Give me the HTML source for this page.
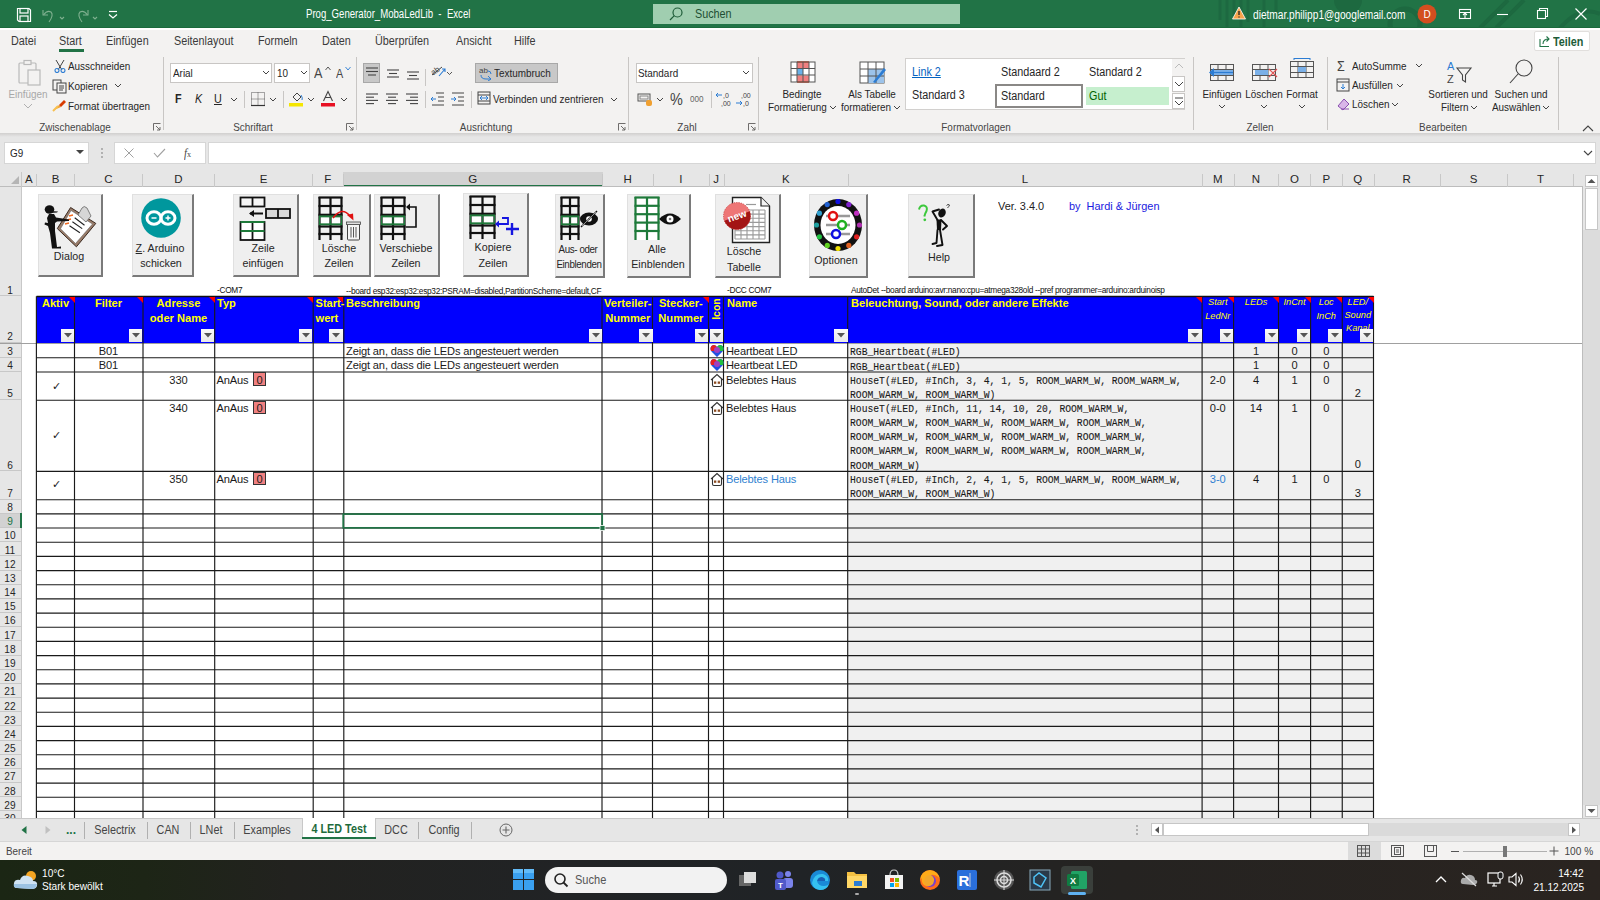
<!DOCTYPE html><html><head><meta charset="utf-8"><style>html,body{margin:0;padding:0;}body{width:1600px;height:900px;overflow:hidden;position:relative;background:#fff;font-family:"Liberation Sans", sans-serif;}</style></head><body>
<div style="position:absolute;left:0px;top:0px;width:1600px;height:28px;background:#217346;"></div>
<svg style="position:absolute;left:1180px;top:0px;" width="420" height="28" viewBox="0 0 420 28"><g fill="none" stroke="#1d6840" opacity="0.9"><path d="M40 0 V20 M47 0 V28 M54 0 V16 M61 0 V28 M68 0 V22 M84 0 V28 M96 0 V12" stroke-width="3"/><circle cx="168" cy="0" r="14" fill="#1d6840" stroke="none"/><circle cx="225" cy="24" r="15" stroke-width="5"/><path d="M300 28 L328 0 M316 28 L344 0 M380 28 Q400 5 420 14" stroke-width="4"/></g></svg>
<svg style="position:absolute;left:16px;top:7px;" width="16" height="16" viewBox="0 0 16 16"><g fill="none" stroke="#fff" stroke-width="1.2"><path d="M1.5 1.5 H13 L14.5 3 V14.5 H3 L1.5 13 Z"/><rect x="4" y="1.5" width="8" height="4.5"/><rect x="4" y="9" width="8" height="5.5"/></g></svg>
<svg style="position:absolute;left:41px;top:7px;" width="24" height="16" viewBox="0 0 24 16"><g fill="none" stroke="#7fb08f" stroke-width="1.1"><path d="M2 3 V8 H7"/><path d="M2.5 8 Q6 3 10 5 Q13 8 8 15"/><path d="M19 10 L21 12 L23 10"/></g></svg>
<svg style="position:absolute;left:74px;top:7px;" width="24" height="16" viewBox="0 0 24 16"><g fill="none" stroke="#7fb08f" stroke-width="1.1"><path d="M14 3 V8 H9"/><path d="M13.5 8 Q10 3 6 5 Q3 8 8 15"/><path d="M19 10 L21 12 L23 10"/></g></svg>
<svg style="position:absolute;left:106px;top:8px;" width="14" height="14" viewBox="0 0 14 14"><g fill="none" stroke="#fff" stroke-width="1.2"><path d="M3 3.5 H11"/><path d="M3 6.5 L7 10 L11 6.5"/></g></svg>
<div style="position:absolute;left:306.00px;transform-origin:0 50%;top:4.50px;height:18px;line-height:18px;font-size:12px;color:#fff;white-space:nowrap;transform:scaleX(0.8);">Prog_Generator_MobaLedLib&nbsp; - &nbsp;Excel</div>
<div style="position:absolute;left:653px;top:4px;width:307px;height:20px;background:#a0ceb0;"></div>
<svg style="position:absolute;left:668px;top:6px;" width="16" height="16" viewBox="0 0 16 16"><g fill="none" stroke="#1e5c38" stroke-width="1.2"><circle cx="9.5" cy="6.5" r="4.5"/><path d="M6.3 9.7 L2 14"/></g></svg>
<div style="position:absolute;left:695.00px;transform-origin:0 50%;top:5.00px;height:18px;line-height:18px;font-size:12px;color:#1e4f33;white-space:nowrap;transform:scaleX(0.9);">Suchen</div>
<svg style="position:absolute;left:1232px;top:6px;" width="14" height="14" viewBox="0 0 14 14"><path d="M7 1 L13.5 13 H0.5 Z" fill="#f7a34b" stroke="#fff" stroke-width="0.8"/><path d="M7 5 V9 M7 10.5 V11.5" stroke="#222" stroke-width="1.3"/></svg>
<div style="position:absolute;left:1253.00px;transform-origin:0 50%;top:5.50px;height:18px;line-height:18px;font-size:12px;color:#fff;white-space:nowrap;transform:scaleX(0.845);">dietmar.philipp1@googlemail.com</div>
<svg style="position:absolute;left:1417px;top:4px;" width="20" height="20" viewBox="0 0 20 20"><circle cx="10" cy="10" r="9.5" fill="#d34e1f"/><text x="10" y="14" text-anchor="middle" font-size="10" fill="#fff" font-family="Liberation Sans">D</text></svg>
<svg style="position:absolute;left:1458px;top:7px;" width="14" height="14" viewBox="0 0 14 14"><g fill="none" stroke="#fff" stroke-width="1.1"><rect x="1.5" y="2.5" width="11" height="9"/><path d="M1.5 5.5 H12.5 M7 5.5 V11.5 M5 8 L7 6 L9 8"/></g></svg>
<svg style="position:absolute;left:1496px;top:7px;" width="14" height="14" viewBox="0 0 14 14"><path d="M1 7.5 H12" stroke="#fff" stroke-width="1.1"/></svg>
<svg style="position:absolute;left:1536px;top:7px;" width="14" height="14" viewBox="0 0 14 14"><g fill="none" stroke="#fff" stroke-width="1.1"><rect x="1.5" y="3.5" width="8" height="8"/><path d="M3.5 3.5 V1.5 H11.5 V9.5 H9.5"/></g></svg>
<svg style="position:absolute;left:1574px;top:7px;" width="14" height="14" viewBox="0 0 14 14"><path d="M1.5 1.5 L12.5 12.5 M12.5 1.5 L1.5 12.5" stroke="#fff" stroke-width="1.2"/></svg>
<div style="position:absolute;left:0px;top:28px;width:1600px;height:105px;background:#f3f2f1;"></div>
<div style="position:absolute;left:0px;top:27px;width:1600px;height:1px;background:#1b6a3c;"></div>
<div style="position:absolute;left:0px;top:28px;width:1600px;height:1.5px;background:#ffffff;"></div>
<div style="position:absolute;left:11.00px;transform-origin:0 50%;top:32.00px;height:18px;line-height:18px;font-size:12px;color:#3a3a3a;white-space:nowrap;transform:scaleX(0.9);">Datei</div>
<div style="position:absolute;left:59.00px;transform-origin:0 50%;top:32.00px;height:18px;line-height:18px;font-size:12px;color:#3a3a3a;white-space:nowrap;transform:scaleX(0.9);">Start</div>
<div style="position:absolute;left:106.00px;transform-origin:0 50%;top:32.00px;height:18px;line-height:18px;font-size:12px;color:#3a3a3a;white-space:nowrap;transform:scaleX(0.9);">Einfügen</div>
<div style="position:absolute;left:174.00px;transform-origin:0 50%;top:32.00px;height:18px;line-height:18px;font-size:12px;color:#3a3a3a;white-space:nowrap;transform:scaleX(0.9);">Seitenlayout</div>
<div style="position:absolute;left:258.00px;transform-origin:0 50%;top:32.00px;height:18px;line-height:18px;font-size:12px;color:#3a3a3a;white-space:nowrap;transform:scaleX(0.9);">Formeln</div>
<div style="position:absolute;left:322.00px;transform-origin:0 50%;top:32.00px;height:18px;line-height:18px;font-size:12px;color:#3a3a3a;white-space:nowrap;transform:scaleX(0.9);">Daten</div>
<div style="position:absolute;left:375.00px;transform-origin:0 50%;top:32.00px;height:18px;line-height:18px;font-size:12px;color:#3a3a3a;white-space:nowrap;transform:scaleX(0.9);">Überprüfen</div>
<div style="position:absolute;left:456.00px;transform-origin:0 50%;top:32.00px;height:18px;line-height:18px;font-size:12px;color:#3a3a3a;white-space:nowrap;transform:scaleX(0.9);">Ansicht</div>
<div style="position:absolute;left:514.00px;transform-origin:0 50%;top:32.00px;height:18px;line-height:18px;font-size:12px;color:#3a3a3a;white-space:nowrap;transform:scaleX(0.9);">Hilfe</div>
<div style="position:absolute;left:59px;top:49px;width:25px;height:2.5px;background:#217346;"></div>
<div style="position:absolute;left:1534px;top:31px;width:56px;height:20px;background:#fff;border:1px solid #e1dfdd;border-radius:2px;box-sizing:border-box;"></div>
<svg style="position:absolute;left:1538px;top:34px;" width="14" height="14" viewBox="0 0 14 14"><g fill="none" stroke="#217346" stroke-width="1.1"><path d="M2 5 V12.5 H11"/><path d="M5 10 Q5 5 11 5 M8.5 2.5 L11 5 L8.5 7.5"/></g></svg>
<div style="position:absolute;left:1553.00px;transform-origin:0 50%;top:32.50px;height:18px;line-height:18px;font-size:12px;color:#1e5c38;white-space:nowrap;transform:scaleX(0.9);font-weight:bold;">Teilen</div>
<div style="position:absolute;left:163px;top:57px;width:1px;height:73px;background:#c8c6c4;"></div>
<div style="position:absolute;left:356px;top:57px;width:1px;height:73px;background:#c8c6c4;"></div>
<div style="position:absolute;left:628px;top:57px;width:1px;height:73px;background:#c8c6c4;"></div>
<div style="position:absolute;left:758px;top:57px;width:1px;height:73px;background:#c8c6c4;"></div>
<div style="position:absolute;left:1193px;top:57px;width:1px;height:73px;background:#c8c6c4;"></div>
<div style="position:absolute;left:1327px;top:57px;width:1px;height:73px;background:#c8c6c4;"></div>
<div style="position:absolute;left:1558px;top:57px;width:1px;height:73px;background:#c8c6c4;"></div>
<div style="position:absolute;left:-225.00px;width:600px;text-align:center;transform-origin:50% 50%;top:118.50px;height:17px;line-height:17px;font-size:11px;color:#454545;white-space:nowrap;transform:scaleX(0.9);">Zwischenablage</div>
<div style="position:absolute;left:-47.00px;width:600px;text-align:center;transform-origin:50% 50%;top:118.50px;height:17px;line-height:17px;font-size:11px;color:#454545;white-space:nowrap;transform:scaleX(0.9);">Schriftart</div>
<div style="position:absolute;left:186.00px;width:600px;text-align:center;transform-origin:50% 50%;top:118.50px;height:17px;line-height:17px;font-size:11px;color:#454545;white-space:nowrap;transform:scaleX(0.9);">Ausrichtung</div>
<div style="position:absolute;left:387.00px;width:600px;text-align:center;transform-origin:50% 50%;top:118.50px;height:17px;line-height:17px;font-size:11px;color:#454545;white-space:nowrap;transform:scaleX(0.9);">Zahl</div>
<div style="position:absolute;left:676.00px;width:600px;text-align:center;transform-origin:50% 50%;top:118.50px;height:17px;line-height:17px;font-size:11px;color:#454545;white-space:nowrap;transform:scaleX(0.9);">Formatvorlagen</div>
<div style="position:absolute;left:960.00px;width:600px;text-align:center;transform-origin:50% 50%;top:118.50px;height:17px;line-height:17px;font-size:11px;color:#454545;white-space:nowrap;transform:scaleX(0.9);">Zellen</div>
<div style="position:absolute;left:1143.00px;width:600px;text-align:center;transform-origin:50% 50%;top:118.50px;height:17px;line-height:17px;font-size:11px;color:#454545;white-space:nowrap;transform:scaleX(0.9);">Bearbeiten</div>
<svg style="position:absolute;left:153px;top:123px;" width="8" height="8" viewBox="0 0 8 8"><g fill="none" stroke="#605e5c" stroke-width="0.9"><path d="M0.5 7.5 V0.5 H7.5"/><path d="M3 3 L7 7 M7 4 V7 H4"/></g></svg>
<svg style="position:absolute;left:346px;top:123px;" width="8" height="8" viewBox="0 0 8 8"><g fill="none" stroke="#605e5c" stroke-width="0.9"><path d="M0.5 7.5 V0.5 H7.5"/><path d="M3 3 L7 7 M7 4 V7 H4"/></g></svg>
<svg style="position:absolute;left:618px;top:123px;" width="8" height="8" viewBox="0 0 8 8"><g fill="none" stroke="#605e5c" stroke-width="0.9"><path d="M0.5 7.5 V0.5 H7.5"/><path d="M3 3 L7 7 M7 4 V7 H4"/></g></svg>
<svg style="position:absolute;left:748px;top:123px;" width="8" height="8" viewBox="0 0 8 8"><g fill="none" stroke="#605e5c" stroke-width="0.9"><path d="M0.5 7.5 V0.5 H7.5"/><path d="M3 3 L7 7 M7 4 V7 H4"/></g></svg>
<svg style="position:absolute;left:1582px;top:124px;" width="12" height="8" viewBox="0 0 12 8"><path d="M1 7 L6 2 L11 7" fill="none" stroke="#444" stroke-width="1.1"/></svg>
<svg style="position:absolute;left:17px;top:59px;" width="28" height="28" viewBox="0 0 28 28"><g fill="none" stroke="#b9b9b9" stroke-width="1.2"><rect x="2" y="4" width="17" height="20" rx="1"/><rect x="7" y="1.5" width="7" height="4" fill="#f3f2f1"/><rect x="11" y="11" width="12" height="15" fill="#f3f2f1"/></g></svg>
<div style="position:absolute;left:-272.00px;width:600px;text-align:center;transform-origin:50% 50%;top:85.50px;height:17px;line-height:17px;font-size:11px;color:#a8a8a8;white-space:nowrap;transform:scaleX(0.9);">Einfügen</div>
<svg style="position:absolute;left:23px;top:103px;" width="10" height="6" viewBox="0 0 10 6"><path d="M1 1 L5 5 L9 1" fill="none" stroke="#b0b0b0" stroke-width="1"/></svg>
<svg style="position:absolute;left:53px;top:59px;" width="14" height="14" viewBox="0 0 14 14"><g fill="none" stroke="#444" stroke-width="1"><path d="M3 1 L9 11 M11 1 L5 11"/></g><g fill="none" stroke="#2b7cd3" stroke-width="1.1"><circle cx="4" cy="11.5" r="2"/><circle cx="10" cy="11.5" r="2"/></g></svg>
<div style="position:absolute;left:68.00px;transform-origin:0 50%;top:57.50px;height:17px;line-height:17px;font-size:11px;color:#262626;white-space:nowrap;transform:scaleX(0.9);">Ausschneiden</div>
<svg style="position:absolute;left:52px;top:79px;" width="15" height="15" viewBox="0 0 15 15"><g fill="none" stroke="#444" stroke-width="1"><rect x="1" y="1" width="8" height="10"/><rect x="5" y="4" width="9" height="10" fill="#f3f2f1"/><path d="M7 7 H12 M7 9 H12 M7 11 H11"/></g></svg>
<div style="position:absolute;left:68.00px;transform-origin:0 50%;top:77.50px;height:17px;line-height:17px;font-size:11px;color:#262626;white-space:nowrap;transform:scaleX(0.9);">Kopieren</div>
<svg style="position:absolute;left:114px;top:83px;" width="8" height="6" viewBox="0 0 8 6"><path d="M1 1 L4 4 L7 1" fill="none" stroke="#444" stroke-width="1"/></svg>
<svg style="position:absolute;left:52px;top:98px;" width="15" height="14" viewBox="0 0 15 14"><path d="M2 12 L7 7 L9 9 Z" fill="#f0a030"/><path d="M7 7 L12 2 L14 4 L9 9 Z" fill="#d83b01"/><path d="M1 13 L6 8" stroke="#f7c050" stroke-width="2"/></svg>
<div style="position:absolute;left:68.00px;transform-origin:0 50%;top:97.50px;height:17px;line-height:17px;font-size:11px;color:#262626;white-space:nowrap;transform:scaleX(0.9);">Format übertragen</div>
<div style="position:absolute;left:170px;top:63px;width:102px;height:20px;background:#fff;border:1px solid #c8c6c4;box-sizing:border-box;"></div>
<div style="position:absolute;left:173.00px;transform-origin:0 50%;top:64.50px;height:17px;line-height:17px;font-size:11px;color:#262626;white-space:nowrap;transform:scaleX(0.9);">Arial</div>
<svg style="position:absolute;left:262px;top:70px;" width="8" height="6" viewBox="0 0 8 6"><path d="M1 1 L4 4 L7 1" fill="none" stroke="#444" stroke-width="1"/></svg>
<div style="position:absolute;left:274px;top:63px;width:36px;height:20px;background:#fff;border:1px solid #c8c6c4;box-sizing:border-box;"></div>
<div style="position:absolute;left:277.00px;transform-origin:0 50%;top:64.50px;height:17px;line-height:17px;font-size:11px;color:#262626;white-space:nowrap;transform:scaleX(0.9);">10</div>
<svg style="position:absolute;left:300px;top:70px;" width="8" height="6" viewBox="0 0 8 6"><path d="M1 1 L4 4 L7 1" fill="none" stroke="#444" stroke-width="1"/></svg>
<div style="position:absolute;left:314.00px;transform-origin:0 50%;top:63.00px;height:20px;line-height:20px;font-size:14px;color:#444;white-space:nowrap;transform:scaleX(0.9);">A</div>
<svg style="position:absolute;left:325px;top:66px;" width="6" height="5" viewBox="0 0 6 5"><path d="M0.5 4 L3 1 L5.5 4" fill="none" stroke="#444" stroke-width="0.9"/></svg>
<div style="position:absolute;left:336.00px;transform-origin:0 50%;top:65.00px;height:18px;line-height:18px;font-size:12px;color:#444;white-space:nowrap;transform:scaleX(0.9);">A</div>
<svg style="position:absolute;left:345px;top:66px;" width="6" height="5" viewBox="0 0 6 5"><path d="M0.5 1 L3 4 L5.5 1" fill="none" stroke="#2b7cd3" stroke-width="0.9"/></svg>
<div style="position:absolute;left:175.00px;transform-origin:0 50%;top:90.00px;height:18px;line-height:18px;font-size:12px;color:#262626;white-space:nowrap;transform:scaleX(0.9);font-weight:bold;">F</div>
<div style="position:absolute;left:195.00px;transform-origin:0 50%;top:90.00px;height:18px;line-height:18px;font-size:12px;color:#262626;white-space:nowrap;transform:scaleX(0.9);font-style:italic;">K</div>
<div style="position:absolute;left:214.00px;transform-origin:0 50%;top:90.00px;height:18px;line-height:18px;font-size:12px;color:#262626;white-space:nowrap;transform:scaleX(0.9);text-decoration:underline;">U</div>
<svg style="position:absolute;left:230px;top:97px;" width="8" height="6" viewBox="0 0 8 6"><path d="M1 1 L4 4 L7 1" fill="none" stroke="#444" stroke-width="1"/></svg>
<div style="position:absolute;left:244px;top:91px;width:1px;height:17px;background:#c8c6c4;"></div>
<svg style="position:absolute;left:250px;top:91px;" width="16" height="16" viewBox="0 0 16 16"><g fill="none" stroke="#555" stroke-width="1" stroke-dasharray="1 1"><rect x="1.5" y="1.5" width="13" height="13"/><path d="M8 1.5 V14.5 M1.5 8 H14.5"/></g><path d="M1 14.5 H15" stroke="#333" stroke-width="1.2"/></svg>
<svg style="position:absolute;left:269px;top:97px;" width="8" height="6" viewBox="0 0 8 6"><path d="M1 1 L4 4 L7 1" fill="none" stroke="#444" stroke-width="1"/></svg>
<div style="position:absolute;left:283px;top:91px;width:1px;height:17px;background:#c8c6c4;"></div>
<svg style="position:absolute;left:289px;top:90px;" width="16" height="18" viewBox="0 0 16 18"><g fill="none" stroke="#444" stroke-width="1"><path d="M4 7 L8 3 L12 7 L8 11 Z"/></g><path d="M12 5 Q14 8 13 10" stroke="#2b7cd3" fill="none"/><rect x="0" y="13" width="14" height="3.5" fill="#f5e600"/></svg>
<svg style="position:absolute;left:307px;top:97px;" width="8" height="6" viewBox="0 0 8 6"><path d="M1 1 L4 4 L7 1" fill="none" stroke="#444" stroke-width="1"/></svg>
<svg style="position:absolute;left:321px;top:90px;" width="15" height="18" viewBox="0 0 15 18"><path d="M2.5 11 L7 1.5 L11.5 11 M4.5 7.5 H9.5" fill="none" stroke="#444" stroke-width="1.1"/><rect x="0" y="13" width="14" height="3.5" fill="#e81123"/></svg>
<svg style="position:absolute;left:340px;top:97px;" width="8" height="6" viewBox="0 0 8 6"><path d="M1 1 L4 4 L7 1" fill="none" stroke="#444" stroke-width="1"/></svg>
<div style="position:absolute;left:363px;top:63px;width:17px;height:20px;background:#c8c8c8;border:1px solid #a8a8a8;box-sizing:border-box;"></div>
<svg style="position:absolute;left:364px;top:67px;" width="16" height="16" viewBox="0 0 16 16"><path d="M2 1.0 H14" stroke="#444" stroke-width="1.1"/><path d="M2 4.5 H14" stroke="#444" stroke-width="1.1"/><path d="M4 8.0 H12" stroke="#444" stroke-width="1.1"/></svg>
<svg style="position:absolute;left:385px;top:69px;" width="16" height="16" viewBox="0 0 16 16"><path d="M2 1.0 H14" stroke="#444" stroke-width="1.1"/><path d="M4 4.5 H12" stroke="#444" stroke-width="1.1"/><path d="M2 8.0 H14" stroke="#444" stroke-width="1.1"/></svg>
<svg style="position:absolute;left:405px;top:71px;" width="16" height="16" viewBox="0 0 16 16"><path d="M2 1.0 H14" stroke="#444" stroke-width="1.1"/><path d="M4 4.5 H12" stroke="#444" stroke-width="1.1"/><path d="M2 8.0 H14" stroke="#444" stroke-width="1.1"/></svg>
<svg style="position:absolute;left:430px;top:63px;" width="22" height="18" viewBox="0 0 22 18"><path d="M2 12 L12 4" stroke="#444" stroke-width="1"/><text x="1" y="10" font-size="8" fill="#444" font-family="Liberation Sans" transform="rotate(-35 6 8)">ab</text><path d="M9 13 L15 6 M12 6 H15 V9" stroke="#2b7cd3" fill="none" stroke-width="1.1"/><path d="M17 9 L19.5 11.5 L22 9" stroke="#444" fill="none" stroke-width="0.9"/></svg>
<div style="position:absolute;left:425px;top:69px;width:1px;height:17px;background:#c8c6c4;"></div>
<div style="position:absolute;left:475px;top:63px;width:83px;height:20px;background:#c8c8c8;border:1px solid #a8a8a8;box-sizing:border-box;"></div>
<svg style="position:absolute;left:478px;top:65px;" width="16" height="16" viewBox="0 0 16 16"><text x="1" y="8" font-size="8" fill="#444" font-family="Liberation Sans">ab</text><path d="M3 10 Q3 14 8 14 H13 M10 11 L13 14 L10 16 M13 9 Q13 6 10 6" stroke="#2b7cd3" fill="none" stroke-width="1"/></svg>
<div style="position:absolute;left:494.00px;transform-origin:0 50%;top:64.50px;height:17px;line-height:17px;font-size:11px;color:#262626;white-space:nowrap;transform:scaleX(0.9);">Textumbruch</div>
<svg style="position:absolute;left:364px;top:93px;" width="16" height="16" viewBox="0 0 16 16"><path d="M2 1.0 H14" stroke="#444" stroke-width="1.1"/><path d="M2 4.2 H10" stroke="#444" stroke-width="1.1"/><path d="M2 7.4 H14" stroke="#444" stroke-width="1.1"/><path d="M2 10.600000000000001 H10" stroke="#444" stroke-width="1.1"/></svg>
<svg style="position:absolute;left:384px;top:93px;" width="16" height="16" viewBox="0 0 16 16"><path d="M2 1.0 H14" stroke="#444" stroke-width="1.1"/><path d="M4 4.2 H12" stroke="#444" stroke-width="1.1"/><path d="M2 7.4 H14" stroke="#444" stroke-width="1.1"/><path d="M4 10.600000000000001 H12" stroke="#444" stroke-width="1.1"/></svg>
<svg style="position:absolute;left:404px;top:93px;" width="16" height="16" viewBox="0 0 16 16"><path d="M2 1.0 H14" stroke="#444" stroke-width="1.1"/><path d="M6 4.2 H14" stroke="#444" stroke-width="1.1"/><path d="M2 7.4 H14" stroke="#444" stroke-width="1.1"/><path d="M6 10.600000000000001 H14" stroke="#444" stroke-width="1.1"/></svg>
<div style="position:absolute;left:425px;top:91px;width:1px;height:17px;background:#c8c6c4;"></div>
<svg style="position:absolute;left:430px;top:92px;" width="16" height="14" viewBox="0 0 16 14"><path d="M6 1 H14 M8 5 H14 M8 9 H14 M2 13 H14" stroke="#444" stroke-width="1"/><path d="M1 7 H6 M3 5 L1 7 L3 9" stroke="#2b7cd3" fill="none" stroke-width="1"/></svg>
<svg style="position:absolute;left:450px;top:92px;" width="16" height="14" viewBox="0 0 16 14"><path d="M2 1 H14 M8 5 H14 M8 9 H14 M2 13 H14" stroke="#444" stroke-width="1"/><path d="M1 7 H6 M4 5 L6 7 L4 9" stroke="#2b7cd3" fill="none" stroke-width="1"/></svg>
<div style="position:absolute;left:471px;top:91px;width:1px;height:17px;background:#c8c6c4;"></div>
<svg style="position:absolute;left:477px;top:91px;" width="14" height="14" viewBox="0 0 14 14"><rect x="1" y="1" width="12" height="12" fill="none" stroke="#444"/><path d="M1 4 H13 M1 10 H13" stroke="#444"/><path d="M3 7 H11 M5 5 L3 7 L5 9 M9 5 L11 7 L9 9" stroke="#2b7cd3" fill="none"/></svg>
<div style="position:absolute;left:493.00px;transform-origin:0 50%;top:90.50px;height:17px;line-height:17px;font-size:11px;color:#262626;white-space:nowrap;transform:scaleX(0.9);">Verbinden und zentrieren</div>
<svg style="position:absolute;left:610px;top:97px;" width="8" height="6" viewBox="0 0 8 6"><path d="M1 1 L4 4 L7 1" fill="none" stroke="#444" stroke-width="1"/></svg>
<div style="position:absolute;left:636px;top:63px;width:117px;height:20px;background:#fff;border:1px solid #c8c6c4;box-sizing:border-box;"></div>
<div style="position:absolute;left:638.00px;transform-origin:0 50%;top:64.50px;height:17px;line-height:17px;font-size:11px;color:#262626;white-space:nowrap;transform:scaleX(0.9);">Standard</div>
<svg style="position:absolute;left:742px;top:70px;" width="8" height="6" viewBox="0 0 8 6"><path d="M1 1 L4 4 L7 1" fill="none" stroke="#444" stroke-width="1"/></svg>
<svg style="position:absolute;left:637px;top:92px;" width="16" height="14" viewBox="0 0 16 14"><rect x="1" y="2" width="12" height="7" fill="none" stroke="#555"/><rect x="3" y="4" width="8" height="3" fill="none" stroke="#888"/><rect x="9" y="8" width="6" height="6" rx="2" fill="#f0a030"/></svg>
<svg style="position:absolute;left:656px;top:97px;" width="8" height="6" viewBox="0 0 8 6"><path d="M1 1 L4 4 L7 1" fill="none" stroke="#444" stroke-width="1"/></svg>
<div style="position:absolute;left:670.00px;transform-origin:0 50%;top:88.50px;height:22px;line-height:22px;font-size:16px;color:#444;white-space:nowrap;transform:scaleX(0.9);">%</div>
<div style="position:absolute;left:690.00px;transform-origin:0 50%;top:91.50px;height:15px;line-height:15px;font-size:9px;color:#666;white-space:nowrap;transform:scaleX(0.9);">000</div>
<div style="position:absolute;left:711px;top:91px;width:1px;height:17px;background:#c8c6c4;"></div>
<svg style="position:absolute;left:715px;top:91px;" width="16" height="16" viewBox="0 0 16 16"><text x="8" y="7" font-size="7" fill="#444" font-family="Liberation Sans">,0</text><text x="6" y="15" font-size="7" fill="#444" font-family="Liberation Sans">,00</text><path d="M1 4 H7 M3 2 L1 4 L3 6" stroke="#2b7cd3" fill="none" stroke-width="1"/></svg>
<svg style="position:absolute;left:735px;top:91px;" width="16" height="16" viewBox="0 0 16 16"><text x="6" y="7" font-size="7" fill="#444" font-family="Liberation Sans">,00</text><text x="8" y="15" font-size="7" fill="#444" font-family="Liberation Sans">,0</text><path d="M1 12 H7 M5 10 L7 12 L5 14" stroke="#2b7cd3" fill="none" stroke-width="1"/></svg>
<svg style="position:absolute;left:790px;top:61px;" width="26" height="22" viewBox="0 0 26 22"><rect x="1" y="1" width="24" height="20" fill="#fff"/><rect x="7" y="1.5" width="12" height="6" fill="#f08080"/><rect x="7" y="14.5" width="12" height="6" fill="#f08080"/><rect x="7" y="7.5" width="6" height="6.5" fill="#6ab0e8"/><path d="M7 1 H19 M7 21 H19" stroke="#d04020" stroke-width="1.4"/><g fill="none" stroke="#555" stroke-width="1"><rect x="1" y="1" width="24" height="20"/><path d="M7 1 V21 M13 1 V21 M19 1 V21 M1 7.5 H25 M1 14 H25"/></g></svg>
<div style="position:absolute;left:502.00px;width:600px;text-align:center;transform-origin:50% 50%;top:85.50px;height:17px;line-height:17px;font-size:11px;color:#262626;white-space:nowrap;transform:scaleX(0.9);">Bedingte</div>
<div style="position:absolute;left:767.50px;transform-origin:0 50%;top:98.50px;height:17px;line-height:17px;font-size:11px;color:#262626;white-space:nowrap;transform:scaleX(0.9);">Formatierung</div>
<svg style="position:absolute;left:828.5px;top:105px;" width="8" height="5" viewBox="0 0 8 5"><path d="M1 1 L4 4 L7 1" fill="none" stroke="#444" stroke-width="1"/></svg>
<svg style="position:absolute;left:859px;top:60px;" width="28" height="25" viewBox="0 0 28 25"><g stroke="#555" stroke-width="1" fill="#fff"><rect x="1" y="2" width="24" height="21"/></g><rect x="9" y="9" width="16" height="14" fill="#9cc3ea"/><path d="M9 2 V23 M17 2 V23 M1 9 H25 M1 16 H25" stroke="#555"/><path d="M14 22 L25 8 L27 10 L16 23 Z" fill="#2b7cd3"/></svg>
<div style="position:absolute;left:572.00px;width:600px;text-align:center;transform-origin:50% 50%;top:85.50px;height:17px;line-height:17px;font-size:11px;color:#262626;white-space:nowrap;transform:scaleX(0.9);">Als Tabelle</div>
<div style="position:absolute;left:841.00px;transform-origin:0 50%;top:98.50px;height:17px;line-height:17px;font-size:11px;color:#262626;white-space:nowrap;transform:scaleX(0.9);">formatieren</div>
<svg style="position:absolute;left:893px;top:105px;" width="8" height="5" viewBox="0 0 8 5"><path d="M1 1 L4 4 L7 1" fill="none" stroke="#444" stroke-width="1"/></svg>
<div style="position:absolute;left:905px;top:58px;width:280px;height:52px;background:#fff;border:1px solid #d2d0ce;box-sizing:border-box;"></div>
<div style="position:absolute;left:912.00px;transform-origin:0 50%;top:63.00px;height:18px;line-height:18px;font-size:12px;color:#0563c1;white-space:nowrap;transform:scaleX(0.9);text-decoration:underline;">Link 2</div>
<div style="position:absolute;left:1001.00px;transform-origin:0 50%;top:63.00px;height:18px;line-height:18px;font-size:12px;color:#262626;white-space:nowrap;transform:scaleX(0.9);">Standaard 2</div>
<div style="position:absolute;left:1089.00px;transform-origin:0 50%;top:63.00px;height:18px;line-height:18px;font-size:12px;color:#262626;white-space:nowrap;transform:scaleX(0.9);">Standard 2</div>
<div style="position:absolute;left:912.00px;transform-origin:0 50%;top:86.00px;height:18px;line-height:18px;font-size:12px;color:#262626;white-space:nowrap;transform:scaleX(0.9);">Standard 3</div>
<div style="position:absolute;left:995px;top:84px;width:88px;height:24px;background:#fff;border:2px solid #8a8886;box-sizing:border-box;"></div>
<div style="position:absolute;left:1001.00px;transform-origin:0 50%;top:86.50px;height:18px;line-height:18px;font-size:12px;color:#262626;white-space:nowrap;transform:scaleX(0.9);">Standard</div>
<div style="position:absolute;left:1086px;top:87px;width:83px;height:18px;background:#c6efce;"></div>
<div style="position:absolute;left:1089.00px;transform-origin:0 50%;top:87.00px;height:18px;line-height:18px;font-size:12px;color:#006100;white-space:nowrap;transform:scaleX(0.9);">Gut</div>
<div style="position:absolute;left:1172px;top:59px;width:14px;height:50px;background:#f3f2f1;"></div>
<div style="position:absolute;left:1172px;top:76px;width:13px;height:16px;background:#fff;border:1px solid #c8c6c4;box-sizing:border-box;"></div>
<div style="position:absolute;left:1172px;top:93px;width:13px;height:16px;background:#fff;border:1px solid #c8c6c4;box-sizing:border-box;"></div>
<svg style="position:absolute;left:1174px;top:63px;" width="10" height="6" viewBox="0 0 10 6"><path d="M1 5 L5 1 L9 5" fill="none" stroke="#bbb" stroke-width="1"/></svg>
<svg style="position:absolute;left:1174px;top:81px;" width="10" height="6" viewBox="0 0 10 6"><path d="M1 1 L5 5 L9 1" fill="none" stroke="#444" stroke-width="1"/></svg>
<svg style="position:absolute;left:1174px;top:97px;" width="10" height="9" viewBox="0 0 10 9"><path d="M1 1 H9 M1 4 L5 8 L9 4" fill="none" stroke="#444" stroke-width="1"/></svg>
<svg style="position:absolute;left:1208px;top:61px;" width="28" height="22" viewBox="0 0 28 22"><g stroke="#555" stroke-width="1" fill="none"><rect x="2.5" y="3.5" width="23" height="16"/><path d="M2.5 8.5 H25.5 M2.5 14.5 H25.5 M10 3.5 V19.5 M18 3.5 V19.5"/></g><rect x="6" y="9" width="19" height="5" fill="#7ab0e8"/><path d="M1 11.5 L6 7 V16 Z" fill="#2b7cd3"/><path d="M5 11.5 H25" stroke="#2b7cd3" stroke-width="1.2"/></svg>
<svg style="position:absolute;left:1250px;top:61px;" width="28" height="22" viewBox="0 0 28 22"><g stroke="#555" stroke-width="1" fill="none"><rect x="2.5" y="3.5" width="23" height="16"/><path d="M2.5 8.5 H25.5 M2.5 14.5 H25.5 M10 3.5 V19.5 M18 3.5 V19.5"/></g><rect x="5" y="9" width="13" height="5" fill="#7ab0e8"/><path d="M19 8 L27 16 M27 8 L19 16" stroke="#e05050" stroke-width="1.2"/></svg>
<svg style="position:absolute;left:1288px;top:58px;" width="28" height="22" viewBox="0 0 28 22"><g stroke="#555" stroke-width="1" fill="none"><rect x="2.5" y="3.5" width="23" height="16"/><path d="M2.5 8.5 H25.5 M2.5 14.5 H25.5 M10 3.5 V19.5 M18 3.5 V19.5"/></g><rect x="10" y="9" width="8" height="5" fill="#7ab0e8"/><path d="M6 0.5 H22 M6 0 V2 M22 0 V2" stroke="#2b7cd3"/></svg>
<div style="position:absolute;left:922.00px;width:600px;text-align:center;transform-origin:50% 50%;top:85.50px;height:17px;line-height:17px;font-size:11px;color:#262626;white-space:nowrap;transform:scaleX(0.9);">Einfügen</div>
<div style="position:absolute;left:964.00px;width:600px;text-align:center;transform-origin:50% 50%;top:85.50px;height:17px;line-height:17px;font-size:11px;color:#262626;white-space:nowrap;transform:scaleX(0.9);">Löschen</div>
<div style="position:absolute;left:1002.00px;width:600px;text-align:center;transform-origin:50% 50%;top:85.50px;height:17px;line-height:17px;font-size:11px;color:#262626;white-space:nowrap;transform:scaleX(0.9);">Format</div>
<svg style="position:absolute;left:1218px;top:104px;" width="8" height="6" viewBox="0 0 8 6"><path d="M1 1 L4 4 L7 1" fill="none" stroke="#444" stroke-width="1"/></svg>
<svg style="position:absolute;left:1260px;top:104px;" width="8" height="6" viewBox="0 0 8 6"><path d="M1 1 L4 4 L7 1" fill="none" stroke="#444" stroke-width="1"/></svg>
<svg style="position:absolute;left:1298px;top:104px;" width="8" height="6" viewBox="0 0 8 6"><path d="M1 1 L4 4 L7 1" fill="none" stroke="#444" stroke-width="1"/></svg>
<div style="position:absolute;left:1337.00px;transform-origin:0 50%;top:56.00px;height:20px;line-height:20px;font-size:14px;color:#444;white-space:nowrap;transform:scaleX(0.9);">Σ</div>
<div style="position:absolute;left:1352.00px;transform-origin:0 50%;top:57.50px;height:17px;line-height:17px;font-size:11px;color:#262626;white-space:nowrap;transform:scaleX(0.9);">AutoSumme</div>
<svg style="position:absolute;left:1415px;top:63px;" width="8" height="6" viewBox="0 0 8 6"><path d="M1 1 L4 4 L7 1" fill="none" stroke="#444" stroke-width="1"/></svg>
<svg style="position:absolute;left:1336px;top:78px;" width="14" height="14" viewBox="0 0 14 14"><rect x="1" y="1" width="12" height="12" fill="none" stroke="#444"/><path d="M1 4 H13" stroke="#444"/><path d="M7 6 V11 M5 9 L7 11 L9 9" stroke="#2b7cd3" fill="none"/></svg>
<div style="position:absolute;left:1352.00px;transform-origin:0 50%;top:76.50px;height:17px;line-height:17px;font-size:11px;color:#262626;white-space:nowrap;transform:scaleX(0.9);">Ausfüllen</div>
<svg style="position:absolute;left:1395.5px;top:83px;" width="8" height="5" viewBox="0 0 8 5"><path d="M1 1 L4 4 L7 1" fill="none" stroke="#444" stroke-width="1"/></svg>
<svg style="position:absolute;left:1336px;top:97px;" width="14" height="14" viewBox="0 0 14 14"><path d="M2 9 L8 2 L13 7 L7 13 Z" fill="#d9b6e8" stroke="#8a4fb0"/><path d="M5 12 H13" stroke="#8a4fb0"/></svg>
<div style="position:absolute;left:1352.00px;transform-origin:0 50%;top:95.50px;height:17px;line-height:17px;font-size:11px;color:#262626;white-space:nowrap;transform:scaleX(0.9);">Löschen</div>
<svg style="position:absolute;left:1391px;top:102px;" width="8" height="5" viewBox="0 0 8 5"><path d="M1 1 L4 4 L7 1" fill="none" stroke="#444" stroke-width="1"/></svg>
<svg style="position:absolute;left:1446px;top:59px;" width="28" height="26" viewBox="0 0 28 26"><text x="1" y="11" font-size="11" fill="#2b7cd3" font-family="Liberation Sans">A</text><text x="1" y="24" font-size="11" fill="#444" font-family="Liberation Sans">Z</text><path d="M11 9 H25 L19.5 16 V23 L16.5 21 V16 Z" fill="none" stroke="#444" stroke-width="1.1"/></svg>
<div style="position:absolute;left:1158.00px;width:600px;text-align:center;transform-origin:50% 50%;top:85.50px;height:17px;line-height:17px;font-size:11px;color:#262626;white-space:nowrap;transform:scaleX(0.9);">Sortieren und</div>
<div style="position:absolute;left:1441.00px;transform-origin:0 50%;top:98.50px;height:17px;line-height:17px;font-size:11px;color:#262626;white-space:nowrap;transform:scaleX(0.9);">Filtern</div>
<svg style="position:absolute;left:1470px;top:105px;" width="8" height="5" viewBox="0 0 8 5"><path d="M1 1 L4 4 L7 1" fill="none" stroke="#444" stroke-width="1"/></svg>
<svg style="position:absolute;left:1508px;top:58px;" width="28" height="28" viewBox="0 0 28 28"><circle cx="16" cy="10" r="8" fill="none" stroke="#444" stroke-width="1.1"/><path d="M10 16 L2 25" stroke="#444" stroke-width="1.1"/></svg>
<div style="position:absolute;left:1221.00px;width:600px;text-align:center;transform-origin:50% 50%;top:85.50px;height:17px;line-height:17px;font-size:11px;color:#262626;white-space:nowrap;transform:scaleX(0.9);">Suchen und</div>
<div style="position:absolute;left:1492.00px;transform-origin:0 50%;top:98.50px;height:17px;line-height:17px;font-size:11px;color:#262626;white-space:nowrap;transform:scaleX(0.9);">Auswählen</div>
<svg style="position:absolute;left:1542px;top:105px;" width="8" height="5" viewBox="0 0 8 5"><path d="M1 1 L4 4 L7 1" fill="none" stroke="#444" stroke-width="1"/></svg>
<div style="position:absolute;left:0px;top:133px;width:1600px;height:54px;background:#e6e6e6;"></div>
<div style="position:absolute;left:0px;top:133px;width:1600px;height:4px;background:linear-gradient(#d0cfce,#e6e6e6);"></div>
<div style="position:absolute;left:4px;top:142px;width:85px;height:22px;background:#fff;border:1px solid #d6d6d6;box-sizing:border-box;"></div>
<div style="position:absolute;left:10.00px;transform-origin:0 50%;top:144.50px;height:17px;line-height:17px;font-size:11px;color:#262626;white-space:nowrap;transform:scaleX(0.9);">G9</div>
<svg style="position:absolute;left:75px;top:149px;" width="10" height="6" viewBox="0 0 10 6"><path d="M1 1 H9 L5 5 Z" fill="#444"/></svg>
<svg style="position:absolute;left:99px;top:146px;" width="6" height="14" viewBox="0 0 6 14"><circle cx="3" cy="3" r="0.9" fill="#999"/><circle cx="3" cy="7" r="0.9" fill="#999"/><circle cx="3" cy="11" r="0.9" fill="#999"/></svg>
<div style="position:absolute;left:114px;top:142px;width:92px;height:22px;background:#fff;border:1px solid #d6d6d6;box-sizing:border-box;"></div>
<svg style="position:absolute;left:123px;top:147px;" width="12" height="12" viewBox="0 0 12 12"><path d="M1.5 1.5 L10.5 10.5 M10.5 1.5 L1.5 10.5" stroke="#a0a0a0" stroke-width="1"/></svg>
<svg style="position:absolute;left:153px;top:147px;" width="13" height="12" viewBox="0 0 13 12"><path d="M1 6 L4.5 10 L12 2" fill="none" stroke="#a0a0a0" stroke-width="1.1"/></svg>
<div style="position:absolute;left:184.00px;transform-origin:0 50%;top:144.00px;height:18px;line-height:18px;font-size:12px;color:#444;white-space:nowrap;transform:scaleX(0.9);font-family:'Liberation Serif',serif;"><i>f</i><span style="font-size:9px">x</span></div>
<div style="position:absolute;left:208px;top:142px;width:1388px;height:22px;background:#fff;border:1px solid #d6d6d6;box-sizing:border-box;"></div>
<svg style="position:absolute;left:1583px;top:150px;" width="10" height="7" viewBox="0 0 10 7"><path d="M1 1 L5 5 L9 1" fill="none" stroke="#444" stroke-width="1.1"/></svg>
<div style="position:absolute;left:0px;top:172px;width:1583px;height:15px;background:#e6e6e6;"></div>
<div style="position:absolute;left:343px;top:172px;width:259.5px;height:15px;background:#d2d2d2;"></div>
<div style="position:absolute;left:343px;top:185px;width:259.5px;height:2px;background:#217346;"></div>
<div style="position:absolute;left:0px;top:186px;width:1583px;height:1px;background:#bdbdbd;"></div>
<svg style="position:absolute;left:10px;top:175px;" width="10" height="10" viewBox="0 0 10 10"><path d="M9 1 V9 H1 Z" fill="#b5b5b5"/></svg>
<div style="position:absolute;left:21px;top:174px;width:1px;height:13px;background:#c8c8c8;"></div>
<div style="position:absolute;left:-271.25px;width:600px;text-align:center;transform-origin:50% 50%;top:170.75px;height:17.5px;line-height:17.5px;font-size:11.5px;color:#262626;white-space:nowrap;">A</div>
<div style="position:absolute;left:36px;top:174px;width:1px;height:13px;background:#c8c8c8;"></div>
<div style="position:absolute;left:-244.50px;width:600px;text-align:center;transform-origin:50% 50%;top:170.75px;height:17.5px;line-height:17.5px;font-size:11.5px;color:#262626;white-space:nowrap;">B</div>
<div style="position:absolute;left:74px;top:174px;width:1px;height:13px;background:#c8c8c8;"></div>
<div style="position:absolute;left:-191.50px;width:600px;text-align:center;transform-origin:50% 50%;top:170.75px;height:17.5px;line-height:17.5px;font-size:11.5px;color:#262626;white-space:nowrap;">C</div>
<div style="position:absolute;left:142px;top:174px;width:1px;height:13px;background:#c8c8c8;"></div>
<div style="position:absolute;left:-121.50px;width:600px;text-align:center;transform-origin:50% 50%;top:170.75px;height:17.5px;line-height:17.5px;font-size:11.5px;color:#262626;white-space:nowrap;">D</div>
<div style="position:absolute;left:214px;top:174px;width:1px;height:13px;background:#c8c8c8;"></div>
<div style="position:absolute;left:-36.50px;width:600px;text-align:center;transform-origin:50% 50%;top:170.75px;height:17.5px;line-height:17.5px;font-size:11.5px;color:#262626;white-space:nowrap;">E</div>
<div style="position:absolute;left:312px;top:174px;width:1px;height:13px;background:#c8c8c8;"></div>
<div style="position:absolute;left:27.75px;width:600px;text-align:center;transform-origin:50% 50%;top:170.75px;height:17.5px;line-height:17.5px;font-size:11.5px;color:#262626;white-space:nowrap;">F</div>
<div style="position:absolute;left:343px;top:174px;width:1px;height:13px;background:#c8c8c8;"></div>
<div style="position:absolute;left:172.75px;width:600px;text-align:center;transform-origin:50% 50%;top:170.75px;height:17.5px;line-height:17.5px;font-size:11.5px;color:#262626;white-space:nowrap;">G</div>
<div style="position:absolute;left:602px;top:174px;width:1px;height:13px;background:#c8c8c8;"></div>
<div style="position:absolute;left:327.75px;width:600px;text-align:center;transform-origin:50% 50%;top:170.75px;height:17.5px;line-height:17.5px;font-size:11.5px;color:#262626;white-space:nowrap;">H</div>
<div style="position:absolute;left:653px;top:174px;width:1px;height:13px;background:#c8c8c8;"></div>
<div style="position:absolute;left:380.88px;width:600px;text-align:center;transform-origin:50% 50%;top:170.75px;height:17.5px;line-height:17.5px;font-size:11.5px;color:#262626;white-space:nowrap;">I</div>
<div style="position:absolute;left:709px;top:174px;width:1px;height:13px;background:#c8c8c8;"></div>
<div style="position:absolute;left:416.12px;width:600px;text-align:center;transform-origin:50% 50%;top:170.75px;height:17.5px;line-height:17.5px;font-size:11.5px;color:#262626;white-space:nowrap;">J</div>
<div style="position:absolute;left:724px;top:174px;width:1px;height:13px;background:#c8c8c8;"></div>
<div style="position:absolute;left:485.75px;width:600px;text-align:center;transform-origin:50% 50%;top:170.75px;height:17.5px;line-height:17.5px;font-size:11.5px;color:#262626;white-space:nowrap;">K</div>
<div style="position:absolute;left:848px;top:174px;width:1px;height:13px;background:#c8c8c8;"></div>
<div style="position:absolute;left:725.00px;width:600px;text-align:center;transform-origin:50% 50%;top:170.75px;height:17.5px;line-height:17.5px;font-size:11.5px;color:#262626;white-space:nowrap;">L</div>
<div style="position:absolute;left:1202px;top:174px;width:1px;height:13px;background:#c8c8c8;"></div>
<div style="position:absolute;left:917.75px;width:600px;text-align:center;transform-origin:50% 50%;top:170.75px;height:17.5px;line-height:17.5px;font-size:11.5px;color:#262626;white-space:nowrap;">M</div>
<div style="position:absolute;left:1234px;top:174px;width:1px;height:13px;background:#c8c8c8;"></div>
<div style="position:absolute;left:956.00px;width:600px;text-align:center;transform-origin:50% 50%;top:170.75px;height:17.5px;line-height:17.5px;font-size:11.5px;color:#262626;white-space:nowrap;">N</div>
<div style="position:absolute;left:1278px;top:174px;width:1px;height:13px;background:#c8c8c8;"></div>
<div style="position:absolute;left:994.50px;width:600px;text-align:center;transform-origin:50% 50%;top:170.75px;height:17.5px;line-height:17.5px;font-size:11.5px;color:#262626;white-space:nowrap;">O</div>
<div style="position:absolute;left:1310px;top:174px;width:1px;height:13px;background:#c8c8c8;"></div>
<div style="position:absolute;left:1026.25px;width:600px;text-align:center;transform-origin:50% 50%;top:170.75px;height:17.5px;line-height:17.5px;font-size:11.5px;color:#262626;white-space:nowrap;">P</div>
<div style="position:absolute;left:1342px;top:174px;width:1px;height:13px;background:#c8c8c8;"></div>
<div style="position:absolute;left:1057.75px;width:600px;text-align:center;transform-origin:50% 50%;top:170.75px;height:17.5px;line-height:17.5px;font-size:11.5px;color:#262626;white-space:nowrap;">Q</div>
<div style="position:absolute;left:1374px;top:174px;width:1px;height:13px;background:#c8c8c8;"></div>
<div style="position:absolute;left:1106.75px;width:600px;text-align:center;transform-origin:50% 50%;top:170.75px;height:17.5px;line-height:17.5px;font-size:11.5px;color:#262626;white-space:nowrap;">R</div>
<div style="position:absolute;left:1440px;top:174px;width:1px;height:13px;background:#c8c8c8;"></div>
<div style="position:absolute;left:1173.50px;width:600px;text-align:center;transform-origin:50% 50%;top:170.75px;height:17.5px;line-height:17.5px;font-size:11.5px;color:#262626;white-space:nowrap;">S</div>
<div style="position:absolute;left:1507px;top:174px;width:1px;height:13px;background:#c8c8c8;"></div>
<div style="position:absolute;left:1240.50px;width:600px;text-align:center;transform-origin:50% 50%;top:170.75px;height:17.5px;line-height:17.5px;font-size:11.5px;color:#262626;white-space:nowrap;">T</div>
<div style="position:absolute;left:21px;top:172px;width:1px;height:15px;background:#c8c8c8;"></div>
<div style="position:absolute;left:0px;top:187px;width:21px;height:631px;background:#e6e6e6;"></div>
<div style="position:absolute;left:21px;top:187px;width:1px;height:631px;background:#c8c8c8;"></div>
<div style="position:absolute;left:0px;top:295px;width:21px;height:1px;background:#c8c8c8;"></div>
<div style="position:absolute;left:0px;top:342px;width:21px;height:1px;background:#c8c8c8;"></div>
<div style="position:absolute;left:0px;top:357px;width:21px;height:1px;background:#c8c8c8;"></div>
<div style="position:absolute;left:0px;top:371px;width:21px;height:1px;background:#c8c8c8;"></div>
<div style="position:absolute;left:0px;top:399px;width:21px;height:1px;background:#c8c8c8;"></div>
<div style="position:absolute;left:0px;top:470px;width:21px;height:1px;background:#c8c8c8;"></div>
<div style="position:absolute;left:0px;top:499px;width:21px;height:1px;background:#c8c8c8;"></div>
<div style="position:absolute;left:0px;top:513px;width:21px;height:1px;background:#c8c8c8;"></div>
<div style="position:absolute;left:0px;top:527px;width:21px;height:1px;background:#c8c8c8;"></div>
<div style="position:absolute;left:0px;top:541px;width:21px;height:1px;background:#c8c8c8;"></div>
<div style="position:absolute;left:0px;top:555px;width:21px;height:1px;background:#c8c8c8;"></div>
<div style="position:absolute;left:0px;top:570px;width:21px;height:1px;background:#c8c8c8;"></div>
<div style="position:absolute;left:0px;top:584px;width:21px;height:1px;background:#c8c8c8;"></div>
<div style="position:absolute;left:0px;top:598px;width:21px;height:1px;background:#c8c8c8;"></div>
<div style="position:absolute;left:0px;top:612px;width:21px;height:1px;background:#c8c8c8;"></div>
<div style="position:absolute;left:0px;top:626px;width:21px;height:1px;background:#c8c8c8;"></div>
<div style="position:absolute;left:0px;top:640px;width:21px;height:1px;background:#c8c8c8;"></div>
<div style="position:absolute;left:0px;top:655px;width:21px;height:1px;background:#c8c8c8;"></div>
<div style="position:absolute;left:0px;top:669px;width:21px;height:1px;background:#c8c8c8;"></div>
<div style="position:absolute;left:0px;top:683px;width:21px;height:1px;background:#c8c8c8;"></div>
<div style="position:absolute;left:0px;top:697px;width:21px;height:1px;background:#c8c8c8;"></div>
<div style="position:absolute;left:0px;top:711px;width:21px;height:1px;background:#c8c8c8;"></div>
<div style="position:absolute;left:0px;top:725px;width:21px;height:1px;background:#c8c8c8;"></div>
<div style="position:absolute;left:0px;top:740px;width:21px;height:1px;background:#c8c8c8;"></div>
<div style="position:absolute;left:0px;top:754px;width:21px;height:1px;background:#c8c8c8;"></div>
<div style="position:absolute;left:0px;top:768px;width:21px;height:1px;background:#c8c8c8;"></div>
<div style="position:absolute;left:0px;top:782px;width:21px;height:1px;background:#c8c8c8;"></div>
<div style="position:absolute;left:0px;top:796px;width:21px;height:1px;background:#c8c8c8;"></div>
<div style="position:absolute;left:0px;top:810px;width:21px;height:1px;background:#c8c8c8;"></div>
<div style="position:absolute;left:-289.60px;width:600px;text-align:center;transform-origin:50% 50%;top:281.55px;height:17.5px;line-height:17.5px;font-size:11.5px;color:#262626;white-space:nowrap;transform:scaleX(0.88);">1</div>
<div style="position:absolute;left:-289.60px;width:600px;text-align:center;transform-origin:50% 50%;top:328.25px;height:17.5px;line-height:17.5px;font-size:11.5px;color:#262626;white-space:nowrap;transform:scaleX(0.88);">2</div>
<div style="position:absolute;left:-289.60px;width:600px;text-align:center;transform-origin:50% 50%;top:343.00px;height:17.5px;line-height:17.5px;font-size:11.5px;color:#262626;white-space:nowrap;transform:scaleX(0.88);">3</div>
<div style="position:absolute;left:-289.60px;width:600px;text-align:center;transform-origin:50% 50%;top:357.25px;height:17.5px;line-height:17.5px;font-size:11.5px;color:#262626;white-space:nowrap;transform:scaleX(0.88);">4</div>
<div style="position:absolute;left:-289.60px;width:600px;text-align:center;transform-origin:50% 50%;top:385.45px;height:17.5px;line-height:17.5px;font-size:11.5px;color:#262626;white-space:nowrap;transform:scaleX(0.88);">5</div>
<div style="position:absolute;left:-289.60px;width:600px;text-align:center;transform-origin:50% 50%;top:456.55px;height:17.5px;line-height:17.5px;font-size:11.5px;color:#262626;white-space:nowrap;transform:scaleX(0.88);">6</div>
<div style="position:absolute;left:-289.60px;width:600px;text-align:center;transform-origin:50% 50%;top:484.95px;height:17.5px;line-height:17.5px;font-size:11.5px;color:#262626;white-space:nowrap;transform:scaleX(0.88);">7</div>
<div style="position:absolute;left:-289.60px;width:600px;text-align:center;transform-origin:50% 50%;top:499.12px;height:17.5px;line-height:17.5px;font-size:11.5px;color:#262626;white-space:nowrap;transform:scaleX(0.88);">8</div>
<div style="position:absolute;left:0px;top:513.87px;width:21px;height:13.169999999999959px;background:#d2d2d2;"></div>
<div style="position:absolute;left:20px;top:513.37px;width:1.5px;height:14.169999999999959px;background:#217346;"></div>
<div style="position:absolute;left:-289.60px;width:600px;text-align:center;transform-origin:50% 50%;top:513.29px;height:17.5px;line-height:17.5px;font-size:11.5px;color:#217346;white-space:nowrap;transform:scaleX(0.88);">9</div>
<div style="position:absolute;left:-289.60px;width:600px;text-align:center;transform-origin:50% 50%;top:527.46px;height:17.5px;line-height:17.5px;font-size:11.5px;color:#262626;white-space:nowrap;transform:scaleX(0.88);">10</div>
<div style="position:absolute;left:-289.60px;width:600px;text-align:center;transform-origin:50% 50%;top:541.63px;height:17.5px;line-height:17.5px;font-size:11.5px;color:#262626;white-space:nowrap;transform:scaleX(0.88);">11</div>
<div style="position:absolute;left:-289.60px;width:600px;text-align:center;transform-origin:50% 50%;top:555.80px;height:17.5px;line-height:17.5px;font-size:11.5px;color:#262626;white-space:nowrap;transform:scaleX(0.88);">12</div>
<div style="position:absolute;left:-289.60px;width:600px;text-align:center;transform-origin:50% 50%;top:569.97px;height:17.5px;line-height:17.5px;font-size:11.5px;color:#262626;white-space:nowrap;transform:scaleX(0.88);">13</div>
<div style="position:absolute;left:-289.60px;width:600px;text-align:center;transform-origin:50% 50%;top:584.14px;height:17.5px;line-height:17.5px;font-size:11.5px;color:#262626;white-space:nowrap;transform:scaleX(0.88);">14</div>
<div style="position:absolute;left:-289.60px;width:600px;text-align:center;transform-origin:50% 50%;top:598.31px;height:17.5px;line-height:17.5px;font-size:11.5px;color:#262626;white-space:nowrap;transform:scaleX(0.88);">15</div>
<div style="position:absolute;left:-289.60px;width:600px;text-align:center;transform-origin:50% 50%;top:612.48px;height:17.5px;line-height:17.5px;font-size:11.5px;color:#262626;white-space:nowrap;transform:scaleX(0.88);">16</div>
<div style="position:absolute;left:-289.60px;width:600px;text-align:center;transform-origin:50% 50%;top:626.65px;height:17.5px;line-height:17.5px;font-size:11.5px;color:#262626;white-space:nowrap;transform:scaleX(0.88);">17</div>
<div style="position:absolute;left:-289.60px;width:600px;text-align:center;transform-origin:50% 50%;top:640.82px;height:17.5px;line-height:17.5px;font-size:11.5px;color:#262626;white-space:nowrap;transform:scaleX(0.88);">18</div>
<div style="position:absolute;left:-289.60px;width:600px;text-align:center;transform-origin:50% 50%;top:654.99px;height:17.5px;line-height:17.5px;font-size:11.5px;color:#262626;white-space:nowrap;transform:scaleX(0.88);">19</div>
<div style="position:absolute;left:-289.60px;width:600px;text-align:center;transform-origin:50% 50%;top:669.16px;height:17.5px;line-height:17.5px;font-size:11.5px;color:#262626;white-space:nowrap;transform:scaleX(0.88);">20</div>
<div style="position:absolute;left:-289.60px;width:600px;text-align:center;transform-origin:50% 50%;top:683.33px;height:17.5px;line-height:17.5px;font-size:11.5px;color:#262626;white-space:nowrap;transform:scaleX(0.88);">21</div>
<div style="position:absolute;left:-289.60px;width:600px;text-align:center;transform-origin:50% 50%;top:697.50px;height:17.5px;line-height:17.5px;font-size:11.5px;color:#262626;white-space:nowrap;transform:scaleX(0.88);">22</div>
<div style="position:absolute;left:-289.60px;width:600px;text-align:center;transform-origin:50% 50%;top:711.67px;height:17.5px;line-height:17.5px;font-size:11.5px;color:#262626;white-space:nowrap;transform:scaleX(0.88);">23</div>
<div style="position:absolute;left:-289.60px;width:600px;text-align:center;transform-origin:50% 50%;top:725.84px;height:17.5px;line-height:17.5px;font-size:11.5px;color:#262626;white-space:nowrap;transform:scaleX(0.88);">24</div>
<div style="position:absolute;left:-289.60px;width:600px;text-align:center;transform-origin:50% 50%;top:740.01px;height:17.5px;line-height:17.5px;font-size:11.5px;color:#262626;white-space:nowrap;transform:scaleX(0.88);">25</div>
<div style="position:absolute;left:-289.60px;width:600px;text-align:center;transform-origin:50% 50%;top:754.18px;height:17.5px;line-height:17.5px;font-size:11.5px;color:#262626;white-space:nowrap;transform:scaleX(0.88);">26</div>
<div style="position:absolute;left:-289.60px;width:600px;text-align:center;transform-origin:50% 50%;top:768.35px;height:17.5px;line-height:17.5px;font-size:11.5px;color:#262626;white-space:nowrap;transform:scaleX(0.88);">27</div>
<div style="position:absolute;left:-289.60px;width:600px;text-align:center;transform-origin:50% 50%;top:782.52px;height:17.5px;line-height:17.5px;font-size:11.5px;color:#262626;white-space:nowrap;transform:scaleX(0.88);">28</div>
<div style="position:absolute;left:-289.60px;width:600px;text-align:center;transform-origin:50% 50%;top:796.69px;height:17.5px;line-height:17.5px;font-size:11.5px;color:#262626;white-space:nowrap;transform:scaleX(0.88);">29</div>
<div style="position:absolute;left:-289.60px;width:600px;text-align:center;transform-origin:50% 50%;top:810.25px;height:17.5px;line-height:17.5px;font-size:11.5px;color:#262626;white-space:nowrap;transform:scaleX(0.88);">30</div>
<div style="position:absolute;left:848px;top:343px;width:525.5px;height:475px;background:#f0f0f0;"></div>
<div style="position:absolute;left:36.5px;top:296.3px;width:1337.0px;height:46.69999999999999px;background:#0000ff;"></div>
<div style="position:absolute;left:0px;top:342.5px;width:1583px;height:1px;background:#a0a0a0;"></div>
<svg style="position:absolute;left:0;top:0;" width="1600" height="818" viewBox="0 0 1600 818"><line x1="36.5" y1="296.5" x2="1373.5" y2="296.5" stroke="#111" stroke-width="1.4"/><line x1="36.5" y1="357.75" x2="1373.5" y2="357.75" stroke="#1a1a1a" stroke-width="1.15"/><line x1="36.5" y1="372" x2="1373.5" y2="372" stroke="#1a1a1a" stroke-width="1.15"/><line x1="36.5" y1="400.2" x2="1373.5" y2="400.2" stroke="#1a1a1a" stroke-width="1.15"/><line x1="36.5" y1="471.3" x2="1373.5" y2="471.3" stroke="#1a1a1a" stroke-width="1.15"/><line x1="36.5" y1="499.7" x2="1373.5" y2="499.7" stroke="#1a1a1a" stroke-width="1.15"/><line x1="36.5" y1="513.87" x2="1373.5" y2="513.87" stroke="#1a1a1a" stroke-width="1.15"/><line x1="36.5" y1="528.04" x2="1373.5" y2="528.04" stroke="#1a1a1a" stroke-width="1.15"/><line x1="36.5" y1="542.21" x2="1373.5" y2="542.21" stroke="#1a1a1a" stroke-width="1.15"/><line x1="36.5" y1="556.38" x2="1373.5" y2="556.38" stroke="#1a1a1a" stroke-width="1.15"/><line x1="36.5" y1="570.55" x2="1373.5" y2="570.55" stroke="#1a1a1a" stroke-width="1.15"/><line x1="36.5" y1="584.72" x2="1373.5" y2="584.72" stroke="#1a1a1a" stroke-width="1.15"/><line x1="36.5" y1="598.89" x2="1373.5" y2="598.89" stroke="#1a1a1a" stroke-width="1.15"/><line x1="36.5" y1="613.06" x2="1373.5" y2="613.06" stroke="#1a1a1a" stroke-width="1.15"/><line x1="36.5" y1="627.23" x2="1373.5" y2="627.23" stroke="#1a1a1a" stroke-width="1.15"/><line x1="36.5" y1="641.4" x2="1373.5" y2="641.4" stroke="#1a1a1a" stroke-width="1.15"/><line x1="36.5" y1="655.5699999999999" x2="1373.5" y2="655.5699999999999" stroke="#1a1a1a" stroke-width="1.15"/><line x1="36.5" y1="669.74" x2="1373.5" y2="669.74" stroke="#1a1a1a" stroke-width="1.15"/><line x1="36.5" y1="683.91" x2="1373.5" y2="683.91" stroke="#1a1a1a" stroke-width="1.15"/><line x1="36.5" y1="698.0799999999999" x2="1373.5" y2="698.0799999999999" stroke="#1a1a1a" stroke-width="1.15"/><line x1="36.5" y1="712.25" x2="1373.5" y2="712.25" stroke="#1a1a1a" stroke-width="1.15"/><line x1="36.5" y1="726.42" x2="1373.5" y2="726.42" stroke="#1a1a1a" stroke-width="1.15"/><line x1="36.5" y1="740.5899999999999" x2="1373.5" y2="740.5899999999999" stroke="#1a1a1a" stroke-width="1.15"/><line x1="36.5" y1="754.76" x2="1373.5" y2="754.76" stroke="#1a1a1a" stroke-width="1.15"/><line x1="36.5" y1="768.9300000000001" x2="1373.5" y2="768.9300000000001" stroke="#1a1a1a" stroke-width="1.15"/><line x1="36.5" y1="783.0999999999999" x2="1373.5" y2="783.0999999999999" stroke="#1a1a1a" stroke-width="1.15"/><line x1="36.5" y1="797.27" x2="1373.5" y2="797.27" stroke="#1a1a1a" stroke-width="1.15"/><line x1="36.5" y1="811.44" x2="1373.5" y2="811.44" stroke="#1a1a1a" stroke-width="1.15"/><line x1="36.4" y1="296.3" x2="36.4" y2="818" stroke="#1a1a1a" stroke-width="1.15"/><line x1="74.5" y1="296.3" x2="74.5" y2="818" stroke="#1a1a1a" stroke-width="1.15"/><line x1="143" y1="296.3" x2="143" y2="818" stroke="#1a1a1a" stroke-width="1.15"/><line x1="214.7" y1="296.3" x2="214.7" y2="818" stroke="#1a1a1a" stroke-width="1.15"/><line x1="313.2" y1="296.3" x2="313.2" y2="818" stroke="#1a1a1a" stroke-width="1.15"/><line x1="343.8" y1="296.3" x2="343.8" y2="818" stroke="#1a1a1a" stroke-width="1.15"/><line x1="602" y1="296.3" x2="602" y2="818" stroke="#1a1a1a" stroke-width="1.15"/><line x1="652.5" y1="296.3" x2="652.5" y2="818" stroke="#1a1a1a" stroke-width="1.15"/><line x1="708.5" y1="296.3" x2="708.5" y2="818" stroke="#1a1a1a" stroke-width="1.15"/><line x1="723.5" y1="296.3" x2="723.5" y2="818" stroke="#1a1a1a" stroke-width="1.15"/><line x1="847.7" y1="296.3" x2="847.7" y2="818" stroke="#1a1a1a" stroke-width="1.15"/><line x1="1202.1" y1="296.3" x2="1202.1" y2="818" stroke="#1a1a1a" stroke-width="1.15"/><line x1="1233.6" y1="296.3" x2="1233.6" y2="818" stroke="#1a1a1a" stroke-width="1.15"/><line x1="1278.5" y1="296.3" x2="1278.5" y2="818" stroke="#1a1a1a" stroke-width="1.15"/><line x1="1310.6" y1="296.3" x2="1310.6" y2="818" stroke="#1a1a1a" stroke-width="1.15"/><line x1="1342.25" y1="296.3" x2="1342.25" y2="818" stroke="#1a1a1a" stroke-width="1.15"/><line x1="1373.5" y1="296.3" x2="1373.5" y2="818" stroke="#1a1a1a" stroke-width="1.15"/></svg>
<div style="position:absolute;left:60.5px;top:328.7px;width:13.5px;height:13px;background:linear-gradient(#fafafa,#e8e8e8);"></div>
<svg style="position:absolute;left:63.5px;top:333px;" width="8" height="5" viewBox="0 0 8 5"><path d="M0 0 H8 L4 4.5 Z" fill="#555"/></svg>
<div style="position:absolute;left:128.5px;top:328.7px;width:13.5px;height:13px;background:linear-gradient(#fafafa,#e8e8e8);"></div>
<svg style="position:absolute;left:131.5px;top:333px;" width="8" height="5" viewBox="0 0 8 5"><path d="M0 0 H8 L4 4.5 Z" fill="#555"/></svg>
<div style="position:absolute;left:200.5px;top:328.7px;width:13.5px;height:13px;background:linear-gradient(#fafafa,#e8e8e8);"></div>
<svg style="position:absolute;left:203.5px;top:333px;" width="8" height="5" viewBox="0 0 8 5"><path d="M0 0 H8 L4 4.5 Z" fill="#555"/></svg>
<div style="position:absolute;left:298.5px;top:328.7px;width:13.5px;height:13px;background:linear-gradient(#fafafa,#e8e8e8);"></div>
<svg style="position:absolute;left:301.5px;top:333px;" width="8" height="5" viewBox="0 0 8 5"><path d="M0 0 H8 L4 4.5 Z" fill="#555"/></svg>
<div style="position:absolute;left:329px;top:328.7px;width:13.5px;height:13px;background:linear-gradient(#fafafa,#e8e8e8);"></div>
<svg style="position:absolute;left:332px;top:333px;" width="8" height="5" viewBox="0 0 8 5"><path d="M0 0 H8 L4 4.5 Z" fill="#555"/></svg>
<div style="position:absolute;left:588.5px;top:328.7px;width:13.5px;height:13px;background:linear-gradient(#fafafa,#e8e8e8);"></div>
<svg style="position:absolute;left:591.5px;top:333px;" width="8" height="5" viewBox="0 0 8 5"><path d="M0 0 H8 L4 4.5 Z" fill="#555"/></svg>
<div style="position:absolute;left:639px;top:328.7px;width:13.5px;height:13px;background:linear-gradient(#fafafa,#e8e8e8);"></div>
<svg style="position:absolute;left:642px;top:333px;" width="8" height="5" viewBox="0 0 8 5"><path d="M0 0 H8 L4 4.5 Z" fill="#555"/></svg>
<div style="position:absolute;left:694.75px;top:328.7px;width:13.5px;height:13px;background:linear-gradient(#fafafa,#e8e8e8);"></div>
<svg style="position:absolute;left:697.75px;top:333px;" width="8" height="5" viewBox="0 0 8 5"><path d="M0 0 H8 L4 4.5 Z" fill="#555"/></svg>
<div style="position:absolute;left:709.5px;top:328.7px;width:13.5px;height:13px;background:linear-gradient(#fafafa,#e8e8e8);"></div>
<svg style="position:absolute;left:712.5px;top:333px;" width="8" height="5" viewBox="0 0 8 5"><path d="M0 0 H8 L4 4.5 Z" fill="#555"/></svg>
<div style="position:absolute;left:834px;top:328.7px;width:13.5px;height:13px;background:linear-gradient(#fafafa,#e8e8e8);"></div>
<svg style="position:absolute;left:837px;top:333px;" width="8" height="5" viewBox="0 0 8 5"><path d="M0 0 H8 L4 4.5 Z" fill="#555"/></svg>
<div style="position:absolute;left:1188px;top:328.7px;width:13.5px;height:13px;background:linear-gradient(#fafafa,#e8e8e8);"></div>
<svg style="position:absolute;left:1191px;top:333px;" width="8" height="5" viewBox="0 0 8 5"><path d="M0 0 H8 L4 4.5 Z" fill="#555"/></svg>
<div style="position:absolute;left:1219.5px;top:328.7px;width:13.5px;height:13px;background:linear-gradient(#fafafa,#e8e8e8);"></div>
<svg style="position:absolute;left:1222.5px;top:333px;" width="8" height="5" viewBox="0 0 8 5"><path d="M0 0 H8 L4 4.5 Z" fill="#555"/></svg>
<div style="position:absolute;left:1264.5px;top:328.7px;width:13.5px;height:13px;background:linear-gradient(#fafafa,#e8e8e8);"></div>
<svg style="position:absolute;left:1267.5px;top:333px;" width="8" height="5" viewBox="0 0 8 5"><path d="M0 0 H8 L4 4.5 Z" fill="#555"/></svg>
<div style="position:absolute;left:1296.5px;top:328.7px;width:13.5px;height:13px;background:linear-gradient(#fafafa,#e8e8e8);"></div>
<svg style="position:absolute;left:1299.5px;top:333px;" width="8" height="5" viewBox="0 0 8 5"><path d="M0 0 H8 L4 4.5 Z" fill="#555"/></svg>
<div style="position:absolute;left:1328px;top:328.7px;width:13.5px;height:13px;background:linear-gradient(#fafafa,#e8e8e8);"></div>
<svg style="position:absolute;left:1331px;top:333px;" width="8" height="5" viewBox="0 0 8 5"><path d="M0 0 H8 L4 4.5 Z" fill="#555"/></svg>
<div style="position:absolute;left:1359.5px;top:328.7px;width:13.5px;height:13px;background:linear-gradient(#fafafa,#e8e8e8);"></div>
<svg style="position:absolute;left:1362.5px;top:333px;" width="8" height="5" viewBox="0 0 8 5"><path d="M0 0 H8 L4 4.5 Z" fill="#555"/></svg>
<svg style="position:absolute;left:68.5px;top:297px;" width="6" height="6" viewBox="0 0 6 6"><path d="M0 0 H6 V6 Z" fill="#ff0000"/></svg>
<svg style="position:absolute;left:136.5px;top:297px;" width="6" height="6" viewBox="0 0 6 6"><path d="M0 0 H6 V6 Z" fill="#ff0000"/></svg>
<svg style="position:absolute;left:208.5px;top:297px;" width="6" height="6" viewBox="0 0 6 6"><path d="M0 0 H6 V6 Z" fill="#ff0000"/></svg>
<svg style="position:absolute;left:306.5px;top:297px;" width="6" height="6" viewBox="0 0 6 6"><path d="M0 0 H6 V6 Z" fill="#ff0000"/></svg>
<svg style="position:absolute;left:337px;top:297px;" width="6" height="6" viewBox="0 0 6 6"><path d="M0 0 H6 V6 Z" fill="#ff0000"/></svg>
<svg style="position:absolute;left:702.75px;top:297px;" width="6" height="6" viewBox="0 0 6 6"><path d="M0 0 H6 V6 Z" fill="#ff0000"/></svg>
<svg style="position:absolute;left:1196px;top:297px;" width="6" height="6" viewBox="0 0 6 6"><path d="M0 0 H6 V6 Z" fill="#ff0000"/></svg>
<svg style="position:absolute;left:1227.5px;top:297px;" width="6" height="6" viewBox="0 0 6 6"><path d="M0 0 H6 V6 Z" fill="#ff0000"/></svg>
<svg style="position:absolute;left:1272.5px;top:297px;" width="6" height="6" viewBox="0 0 6 6"><path d="M0 0 H6 V6 Z" fill="#ff0000"/></svg>
<svg style="position:absolute;left:1304.5px;top:297px;" width="6" height="6" viewBox="0 0 6 6"><path d="M0 0 H6 V6 Z" fill="#ff0000"/></svg>
<svg style="position:absolute;left:1336px;top:297px;" width="6" height="6" viewBox="0 0 6 6"><path d="M0 0 H6 V6 Z" fill="#ff0000"/></svg>
<svg style="position:absolute;left:1367.5px;top:297px;" width="6" height="6" viewBox="0 0 6 6"><path d="M0 0 H6 V6 Z" fill="#ff0000"/></svg>
<div style="position:absolute;left:-244.50px;width:600px;text-align:center;transform-origin:50% 50%;top:295.45px;height:17.1px;line-height:17.1px;font-size:11.1px;color:#ffff00;white-space:nowrap;font-weight:bold;">Aktiv</div>
<div style="position:absolute;left:-191.50px;width:600px;text-align:center;transform-origin:50% 50%;top:295.45px;height:17.1px;line-height:17.1px;font-size:11.1px;color:#ffff00;white-space:nowrap;font-weight:bold;">Filter</div>
<div style="position:absolute;left:-121.50px;width:600px;text-align:center;transform-origin:50% 50%;top:295.45px;height:17.1px;line-height:17.1px;font-size:11.1px;color:#ffff00;white-space:nowrap;font-weight:bold;">Adresse</div>
<div style="position:absolute;left:-121.50px;width:600px;text-align:center;transform-origin:50% 50%;top:309.65px;height:17.1px;line-height:17.1px;font-size:11.1px;color:#ffff00;white-space:nowrap;font-weight:bold;">oder Name</div>
<div style="position:absolute;left:217.00px;transform-origin:0 50%;top:295.45px;height:17.1px;line-height:17.1px;font-size:11.1px;color:#ffff00;white-space:nowrap;font-weight:bold;">Typ</div>
<div style="position:absolute;left:315.50px;transform-origin:0 50%;top:295.45px;height:17.1px;line-height:17.1px;font-size:11.1px;color:#ffff00;white-space:nowrap;font-weight:bold;">Start-</div>
<div style="position:absolute;left:315.50px;transform-origin:0 50%;top:309.65px;height:17.1px;line-height:17.1px;font-size:11.1px;color:#ffff00;white-space:nowrap;font-weight:bold;">wert</div>
<div style="position:absolute;left:346.00px;transform-origin:0 50%;top:295.45px;height:17.1px;line-height:17.1px;font-size:11.1px;color:#ffff00;white-space:nowrap;font-weight:bold;">Beschreibung</div>
<div style="position:absolute;left:327.75px;width:600px;text-align:center;transform-origin:50% 50%;top:295.45px;height:17.1px;line-height:17.1px;font-size:11.1px;color:#ffff00;white-space:nowrap;font-weight:bold;">Verteiler-</div>
<div style="position:absolute;left:327.75px;width:600px;text-align:center;transform-origin:50% 50%;top:309.65px;height:17.1px;line-height:17.1px;font-size:11.1px;color:#ffff00;white-space:nowrap;font-weight:bold;">Nummer</div>
<div style="position:absolute;left:380.88px;width:600px;text-align:center;transform-origin:50% 50%;top:295.45px;height:17.1px;line-height:17.1px;font-size:11.1px;color:#ffff00;white-space:nowrap;font-weight:bold;">Stecker-</div>
<div style="position:absolute;left:380.88px;width:600px;text-align:center;transform-origin:50% 50%;top:309.65px;height:17.1px;line-height:17.1px;font-size:11.1px;color:#ffff00;white-space:nowrap;font-weight:bold;">Nummer</div>
<div style="position:absolute;left:701px;top:302px;width:30px;height:14px;line-height:14px;text-align:center;font-size:10.5px;font-weight:bold;color:#ffff00;transform:rotate(-90deg);">Icon</div>
<div style="position:absolute;left:727.00px;transform-origin:0 50%;top:295.45px;height:17.1px;line-height:17.1px;font-size:11.1px;color:#ffff00;white-space:nowrap;font-weight:bold;">Name</div>
<div style="position:absolute;left:851.00px;transform-origin:0 50%;top:295.45px;height:17.1px;line-height:17.1px;font-size:11.1px;color:#ffff00;white-space:nowrap;font-weight:bold;">Beleuchtung, Sound, oder andere Effekte</div>
<div style="position:absolute;left:917.75px;width:600px;text-align:center;transform-origin:50% 50%;top:294.90px;height:15.2px;line-height:15.2px;font-size:9.2px;color:#ffff00;white-space:nowrap;font-style:italic;">Start</div>
<div style="position:absolute;left:917.75px;width:600px;text-align:center;transform-origin:50% 50%;top:308.60px;height:15.2px;line-height:15.2px;font-size:9.2px;color:#ffff00;white-space:nowrap;font-style:italic;">LedNr</div>
<div style="position:absolute;left:956.00px;width:600px;text-align:center;transform-origin:50% 50%;top:294.90px;height:15.2px;line-height:15.2px;font-size:9.2px;color:#ffff00;white-space:nowrap;font-style:italic;">LEDs</div>
<div style="position:absolute;left:994.50px;width:600px;text-align:center;transform-origin:50% 50%;top:294.90px;height:15.2px;line-height:15.2px;font-size:9.2px;color:#ffff00;white-space:nowrap;font-style:italic;">InCnt</div>
<div style="position:absolute;left:1026.25px;width:600px;text-align:center;transform-origin:50% 50%;top:294.90px;height:15.2px;line-height:15.2px;font-size:9.2px;color:#ffff00;white-space:nowrap;font-style:italic;">Loc</div>
<div style="position:absolute;left:1026.25px;width:600px;text-align:center;transform-origin:50% 50%;top:308.60px;height:15.2px;line-height:15.2px;font-size:9.2px;color:#ffff00;white-space:nowrap;font-style:italic;">InCh</div>
<div style="position:absolute;left:1057.75px;width:600px;text-align:center;transform-origin:50% 50%;top:294.90px;height:15.2px;line-height:15.2px;font-size:9.2px;color:#ffff00;white-space:nowrap;font-style:italic;">LED/</div>
<div style="position:absolute;left:1057.75px;width:600px;text-align:center;transform-origin:50% 50%;top:308.40px;height:15.2px;line-height:15.2px;font-size:9.2px;color:#ffff00;white-space:nowrap;font-style:italic;">Sound</div>
<div style="position:absolute;left:1057.75px;width:600px;text-align:center;transform-origin:50% 50%;top:320.90px;height:15.2px;line-height:15.2px;font-size:9.2px;color:#ffff00;white-space:nowrap;font-style:italic;">Kanal</div>
<div style="position:absolute;left:1359.5px;top:328.7px;width:13.5px;height:13px;background:linear-gradient(#fafafa,#e8e8e8);"></div>
<svg style="position:absolute;left:1362.5px;top:333px;" width="8" height="5" viewBox="0 0 8 5"><path d="M0 0 H8 L4 4.5 Z" fill="#555"/></svg>
<div style="position:absolute;left:217.00px;transform-origin:0 50%;top:283.35px;height:14.3px;line-height:14.3px;font-size:8.3px;color:#111;white-space:nowrap;letter-spacing:-0.3px;">-COM7</div>
<div style="position:absolute;left:346.00px;transform-origin:0 50%;top:283.65px;height:14.3px;line-height:14.3px;font-size:8.3px;color:#111;white-space:nowrap;letter-spacing:-0.3px;">--board esp32:esp32:esp32:PSRAM=disabled,PartitionScheme=default,CF</div>
<div style="position:absolute;left:727.00px;transform-origin:0 50%;top:283.35px;height:14.3px;line-height:14.3px;font-size:8.3px;color:#111;white-space:nowrap;letter-spacing:-0.3px;">-DCC COM7</div>
<div style="position:absolute;left:851.00px;transform-origin:0 50%;top:283.35px;height:14.3px;line-height:14.3px;font-size:8.3px;color:#111;white-space:nowrap;letter-spacing:-0.3px;">AutoDet --board arduino:avr:nano:cpu=atmega328old --pref programmer=arduino:arduinoisp</div>
<div style="position:absolute;left:998.00px;transform-origin:0 50%;top:197.75px;height:17.5px;line-height:17.5px;font-size:11.5px;color:#222;white-space:nowrap;transform:scaleX(0.95);">Ver. 3.4.0</div>
<div style="position:absolute;left:1069.00px;transform-origin:0 50%;top:197.75px;height:17.5px;line-height:17.5px;font-size:11.5px;color:#1a1ae0;white-space:nowrap;transform:scaleX(0.95);">by&nbsp; Hardi &amp; Jürgen</div>
<div style="position:absolute;left:-191.50px;width:600px;text-align:center;transform-origin:50% 50%;top:342.65px;height:17.1px;line-height:17.1px;font-size:11.1px;color:#1a1a1a;white-space:nowrap;letter-spacing:-0.15px;">B01</div>
<div style="position:absolute;left:346.00px;transform-origin:0 50%;top:342.65px;height:17.1px;line-height:17.1px;font-size:11.1px;color:#1a1a1a;white-space:nowrap;letter-spacing:-0.15px;">Zeigt an, dass die LEDs angesteuert werden</div>
<div style="position:absolute;left:726.00px;transform-origin:0 50%;top:342.65px;height:17.1px;line-height:17.1px;font-size:11.1px;color:#1a1a1a;white-space:nowrap;letter-spacing:-0.15px;">Heartbeat LED</div>
<div style="position:absolute;left:850.00px;transform-origin:0 50%;top:343.75px;height:16.7px;line-height:16.7px;font-size:10.7px;color:#1a1a1a;white-space:nowrap;transform:scaleX(0.907);font-family:'Liberation Mono', monospace;-webkit-text-stroke:0.1px #1a1a1a;">RGB_Heartbeat(#LED)</div>
<div style="position:absolute;left:956.00px;width:600px;text-align:center;transform-origin:50% 50%;top:342.65px;height:17.1px;line-height:17.1px;font-size:11.1px;color:#1a1a1a;white-space:nowrap;">1</div>
<div style="position:absolute;left:994.50px;width:600px;text-align:center;transform-origin:50% 50%;top:342.65px;height:17.1px;line-height:17.1px;font-size:11.1px;color:#1a1a1a;white-space:nowrap;">0</div>
<div style="position:absolute;left:1026.25px;width:600px;text-align:center;transform-origin:50% 50%;top:342.65px;height:17.1px;line-height:17.1px;font-size:11.1px;color:#1a1a1a;white-space:nowrap;">0</div>
<svg style="position:absolute;left:709.5px;top:343.5px;" width="14" height="14" viewBox="0 0 14 14"><defs><clipPath id="hc3"><path d="M7 13 L1.5 7.5 Q-0.5 4.5 1.5 2 Q4.5 -0.5 7 3 Q9.5 -0.5 12.5 2 Q14.5 4.5 12.5 7.5 Z"/></clipPath></defs><g clip-path="url(#hc3)"><rect x="0" y="0" width="14" height="14" fill="#2050e0"/><rect x="0" y="0" width="7" height="7" fill="#e82020"/><rect x="7" y="0" width="7" height="7" fill="#20c040"/><circle cx="7" cy="6" r="3" fill="#a040c0"/></g></svg>
<div style="position:absolute;left:-191.50px;width:600px;text-align:center;transform-origin:50% 50%;top:357.40px;height:17.1px;line-height:17.1px;font-size:11.1px;color:#1a1a1a;white-space:nowrap;letter-spacing:-0.15px;">B01</div>
<div style="position:absolute;left:346.00px;transform-origin:0 50%;top:357.40px;height:17.1px;line-height:17.1px;font-size:11.1px;color:#1a1a1a;white-space:nowrap;letter-spacing:-0.15px;">Zeigt an, dass die LEDs angesteuert werden</div>
<div style="position:absolute;left:726.00px;transform-origin:0 50%;top:357.40px;height:17.1px;line-height:17.1px;font-size:11.1px;color:#1a1a1a;white-space:nowrap;letter-spacing:-0.15px;">Heartbeat LED</div>
<div style="position:absolute;left:850.00px;transform-origin:0 50%;top:358.50px;height:16.7px;line-height:16.7px;font-size:10.7px;color:#1a1a1a;white-space:nowrap;transform:scaleX(0.907);font-family:'Liberation Mono', monospace;-webkit-text-stroke:0.1px #1a1a1a;">RGB_Heartbeat(#LED)</div>
<div style="position:absolute;left:956.00px;width:600px;text-align:center;transform-origin:50% 50%;top:357.40px;height:17.1px;line-height:17.1px;font-size:11.1px;color:#1a1a1a;white-space:nowrap;">1</div>
<div style="position:absolute;left:994.50px;width:600px;text-align:center;transform-origin:50% 50%;top:357.40px;height:17.1px;line-height:17.1px;font-size:11.1px;color:#1a1a1a;white-space:nowrap;">0</div>
<div style="position:absolute;left:1026.25px;width:600px;text-align:center;transform-origin:50% 50%;top:357.40px;height:17.1px;line-height:17.1px;font-size:11.1px;color:#1a1a1a;white-space:nowrap;">0</div>
<svg style="position:absolute;left:709.5px;top:358.25px;" width="14" height="14" viewBox="0 0 14 14"><defs><clipPath id="hc4"><path d="M7 13 L1.5 7.5 Q-0.5 4.5 1.5 2 Q4.5 -0.5 7 3 Q9.5 -0.5 12.5 2 Q14.5 4.5 12.5 7.5 Z"/></clipPath></defs><g clip-path="url(#hc4)"><rect x="0" y="0" width="14" height="14" fill="#2050e0"/><rect x="0" y="0" width="7" height="7" fill="#e82020"/><rect x="7" y="0" width="7" height="7" fill="#20c040"/><circle cx="7" cy="6" r="3" fill="#a040c0"/></g></svg>
<div style="position:absolute;left:-244.00px;width:600px;text-align:center;transform-origin:50% 50%;top:377.50px;height:17px;line-height:17px;font-size:11px;color:#1a1a1a;white-space:nowrap;">✓</div>
<div style="position:absolute;left:-121.50px;width:600px;text-align:center;transform-origin:50% 50%;top:371.65px;height:17.1px;line-height:17.1px;font-size:11.1px;color:#1a1a1a;white-space:nowrap;">330</div>
<div style="position:absolute;left:216.50px;transform-origin:0 50%;top:371.65px;height:17.1px;line-height:17.1px;font-size:11.1px;color:#1a1a1a;white-space:nowrap;letter-spacing:-0.15px;">AnAus</div>
<div style="position:absolute;left:253px;top:372.3px;width:13px;height:13.5px;background:#f08080;border:1px solid #333;box-sizing:border-box;"></div>
<div style="position:absolute;left:-40.50px;width:600px;text-align:center;transform-origin:50% 50%;top:371.65px;height:17.1px;line-height:17.1px;font-size:11.1px;color:#1a1a1a;white-space:nowrap;">0</div>
<svg style="position:absolute;left:710px;top:372.5px;" width="14" height="15" viewBox="0 0 14 15"><path d="M1 7 L7 1.5 L13 7" fill="none" stroke="#333" stroke-width="1.1"/><path d="M2.5 6 V12 Q2.5 13.5 4 13.5 H10 Q11.5 13.5 11.5 12 V6" fill="#fff" stroke="#333" stroke-width="1.1"/><rect x="4" y="8.5" width="2.3" height="2.3" fill="#8a4a20"/><rect x="7.7" y="8.5" width="2.3" height="2.3" fill="#8a4a20"/></svg>
<div style="position:absolute;left:726.00px;transform-origin:0 50%;top:371.65px;height:17.1px;line-height:17.1px;font-size:11.1px;color:#1a1a1a;white-space:nowrap;letter-spacing:-0.15px;">Belebtes Haus</div>
<div style="position:absolute;left:850.00px;transform-origin:0 50%;top:372.75px;height:16.7px;line-height:16.7px;font-size:10.7px;color:#1a1a1a;white-space:nowrap;transform:scaleX(0.907);font-family:'Liberation Mono', monospace;-webkit-text-stroke:0.1px #1a1a1a;">HouseT(#LED, #InCh, 3, 4, 1, 5, ROOM_WARM_W, ROOM_WARM_W,</div>
<div style="position:absolute;left:850.00px;transform-origin:0 50%;top:386.92px;height:16.7px;line-height:16.7px;font-size:10.7px;color:#1a1a1a;white-space:nowrap;transform:scaleX(0.907);font-family:'Liberation Mono', monospace;-webkit-text-stroke:0.1px #1a1a1a;">ROOM_WARM_W, ROOM_WARM_W)</div>
<div style="position:absolute;left:917.75px;width:600px;text-align:center;transform-origin:50% 50%;top:371.65px;height:17.1px;line-height:17.1px;font-size:11.1px;color:#1a1a1a;white-space:nowrap;">2-0</div>
<div style="position:absolute;left:956.00px;width:600px;text-align:center;transform-origin:50% 50%;top:371.65px;height:17.1px;line-height:17.1px;font-size:11.1px;color:#1a1a1a;white-space:nowrap;">4</div>
<div style="position:absolute;left:994.50px;width:600px;text-align:center;transform-origin:50% 50%;top:371.65px;height:17.1px;line-height:17.1px;font-size:11.1px;color:#1a1a1a;white-space:nowrap;">1</div>
<div style="position:absolute;left:1026.25px;width:600px;text-align:center;transform-origin:50% 50%;top:371.65px;height:17.1px;line-height:17.1px;font-size:11.1px;color:#1a1a1a;white-space:nowrap;">0</div>
<div style="position:absolute;left:1057.75px;width:600px;text-align:center;transform-origin:50% 50%;top:385.35px;height:17.1px;line-height:17.1px;font-size:11.1px;color:#1a1a1a;white-space:nowrap;">2</div>
<div style="position:absolute;left:-244.00px;width:600px;text-align:center;transform-origin:50% 50%;top:427.00px;height:17px;line-height:17px;font-size:11px;color:#1a1a1a;white-space:nowrap;">✓</div>
<div style="position:absolute;left:-121.50px;width:600px;text-align:center;transform-origin:50% 50%;top:399.85px;height:17.1px;line-height:17.1px;font-size:11.1px;color:#1a1a1a;white-space:nowrap;">340</div>
<div style="position:absolute;left:216.50px;transform-origin:0 50%;top:399.85px;height:17.1px;line-height:17.1px;font-size:11.1px;color:#1a1a1a;white-space:nowrap;letter-spacing:-0.15px;">AnAus</div>
<div style="position:absolute;left:253px;top:400.5px;width:13px;height:13.5px;background:#f08080;border:1px solid #333;box-sizing:border-box;"></div>
<div style="position:absolute;left:-40.50px;width:600px;text-align:center;transform-origin:50% 50%;top:399.85px;height:17.1px;line-height:17.1px;font-size:11.1px;color:#1a1a1a;white-space:nowrap;">0</div>
<svg style="position:absolute;left:710px;top:400.7px;" width="14" height="15" viewBox="0 0 14 15"><path d="M1 7 L7 1.5 L13 7" fill="none" stroke="#333" stroke-width="1.1"/><path d="M2.5 6 V12 Q2.5 13.5 4 13.5 H10 Q11.5 13.5 11.5 12 V6" fill="#fff" stroke="#333" stroke-width="1.1"/><rect x="4" y="8.5" width="2.3" height="2.3" fill="#8a4a20"/><rect x="7.7" y="8.5" width="2.3" height="2.3" fill="#8a4a20"/></svg>
<div style="position:absolute;left:726.00px;transform-origin:0 50%;top:399.85px;height:17.1px;line-height:17.1px;font-size:11.1px;color:#1a1a1a;white-space:nowrap;letter-spacing:-0.15px;">Belebtes Haus</div>
<div style="position:absolute;left:850.00px;transform-origin:0 50%;top:400.95px;height:16.7px;line-height:16.7px;font-size:10.7px;color:#1a1a1a;white-space:nowrap;transform:scaleX(0.907);font-family:'Liberation Mono', monospace;-webkit-text-stroke:0.1px #1a1a1a;">HouseT(#LED, #InCh, 11, 14, 10, 20, ROOM_WARM_W,</div>
<div style="position:absolute;left:850.00px;transform-origin:0 50%;top:415.12px;height:16.7px;line-height:16.7px;font-size:10.7px;color:#1a1a1a;white-space:nowrap;transform:scaleX(0.907);font-family:'Liberation Mono', monospace;-webkit-text-stroke:0.1px #1a1a1a;">ROOM_WARM_W, ROOM_WARM_W, ROOM_WARM_W, ROOM_WARM_W,</div>
<div style="position:absolute;left:850.00px;transform-origin:0 50%;top:429.29px;height:16.7px;line-height:16.7px;font-size:10.7px;color:#1a1a1a;white-space:nowrap;transform:scaleX(0.907);font-family:'Liberation Mono', monospace;-webkit-text-stroke:0.1px #1a1a1a;">ROOM_WARM_W, ROOM_WARM_W, ROOM_WARM_W, ROOM_WARM_W,</div>
<div style="position:absolute;left:850.00px;transform-origin:0 50%;top:443.46px;height:16.7px;line-height:16.7px;font-size:10.7px;color:#1a1a1a;white-space:nowrap;transform:scaleX(0.907);font-family:'Liberation Mono', monospace;-webkit-text-stroke:0.1px #1a1a1a;">ROOM_WARM_W, ROOM_WARM_W, ROOM_WARM_W, ROOM_WARM_W,</div>
<div style="position:absolute;left:850.00px;transform-origin:0 50%;top:457.63px;height:16.7px;line-height:16.7px;font-size:10.7px;color:#1a1a1a;white-space:nowrap;transform:scaleX(0.907);font-family:'Liberation Mono', monospace;-webkit-text-stroke:0.1px #1a1a1a;">ROOM_WARM_W)</div>
<div style="position:absolute;left:917.75px;width:600px;text-align:center;transform-origin:50% 50%;top:399.85px;height:17.1px;line-height:17.1px;font-size:11.1px;color:#1a1a1a;white-space:nowrap;">0-0</div>
<div style="position:absolute;left:956.00px;width:600px;text-align:center;transform-origin:50% 50%;top:399.85px;height:17.1px;line-height:17.1px;font-size:11.1px;color:#1a1a1a;white-space:nowrap;">14</div>
<div style="position:absolute;left:994.50px;width:600px;text-align:center;transform-origin:50% 50%;top:399.85px;height:17.1px;line-height:17.1px;font-size:11.1px;color:#1a1a1a;white-space:nowrap;">1</div>
<div style="position:absolute;left:1026.25px;width:600px;text-align:center;transform-origin:50% 50%;top:399.85px;height:17.1px;line-height:17.1px;font-size:11.1px;color:#1a1a1a;white-space:nowrap;">0</div>
<div style="position:absolute;left:1057.75px;width:600px;text-align:center;transform-origin:50% 50%;top:456.45px;height:17.1px;line-height:17.1px;font-size:11.1px;color:#1a1a1a;white-space:nowrap;">0</div>
<div style="position:absolute;left:-244.00px;width:600px;text-align:center;transform-origin:50% 50%;top:476.00px;height:17px;line-height:17px;font-size:11px;color:#1a1a1a;white-space:nowrap;">✓</div>
<div style="position:absolute;left:-121.50px;width:600px;text-align:center;transform-origin:50% 50%;top:470.95px;height:17.1px;line-height:17.1px;font-size:11.1px;color:#1a1a1a;white-space:nowrap;">350</div>
<div style="position:absolute;left:216.50px;transform-origin:0 50%;top:470.95px;height:17.1px;line-height:17.1px;font-size:11.1px;color:#1a1a1a;white-space:nowrap;letter-spacing:-0.15px;">AnAus</div>
<div style="position:absolute;left:253px;top:471.6px;width:13px;height:13.5px;background:#f08080;border:1px solid #333;box-sizing:border-box;"></div>
<div style="position:absolute;left:-40.50px;width:600px;text-align:center;transform-origin:50% 50%;top:470.95px;height:17.1px;line-height:17.1px;font-size:11.1px;color:#1a1a1a;white-space:nowrap;">0</div>
<svg style="position:absolute;left:710px;top:471.8px;" width="14" height="15" viewBox="0 0 14 15"><path d="M1 7 L7 1.5 L13 7" fill="none" stroke="#333" stroke-width="1.1"/><path d="M2.5 6 V12 Q2.5 13.5 4 13.5 H10 Q11.5 13.5 11.5 12 V6" fill="#fff" stroke="#333" stroke-width="1.1"/><rect x="4" y="8.5" width="2.3" height="2.3" fill="#8a4a20"/><rect x="7.7" y="8.5" width="2.3" height="2.3" fill="#8a4a20"/></svg>
<div style="position:absolute;left:726.00px;transform-origin:0 50%;top:470.95px;height:17.1px;line-height:17.1px;font-size:11.1px;color:#2f7fd0;white-space:nowrap;letter-spacing:-0.15px;">Belebtes Haus</div>
<div style="position:absolute;left:850.00px;transform-origin:0 50%;top:472.05px;height:16.7px;line-height:16.7px;font-size:10.7px;color:#1a1a1a;white-space:nowrap;transform:scaleX(0.907);font-family:'Liberation Mono', monospace;-webkit-text-stroke:0.1px #1a1a1a;">HouseT(#LED, #InCh, 2, 4, 1, 5, ROOM_WARM_W, ROOM_WARM_W,</div>
<div style="position:absolute;left:850.00px;transform-origin:0 50%;top:486.22px;height:16.7px;line-height:16.7px;font-size:10.7px;color:#1a1a1a;white-space:nowrap;transform:scaleX(0.907);font-family:'Liberation Mono', monospace;-webkit-text-stroke:0.1px #1a1a1a;">ROOM_WARM_W, ROOM_WARM_W)</div>
<div style="position:absolute;left:917.75px;width:600px;text-align:center;transform-origin:50% 50%;top:470.95px;height:17.1px;line-height:17.1px;font-size:11.1px;color:#2f7fd0;white-space:nowrap;">3-0</div>
<div style="position:absolute;left:956.00px;width:600px;text-align:center;transform-origin:50% 50%;top:470.95px;height:17.1px;line-height:17.1px;font-size:11.1px;color:#1a1a1a;white-space:nowrap;">4</div>
<div style="position:absolute;left:994.50px;width:600px;text-align:center;transform-origin:50% 50%;top:470.95px;height:17.1px;line-height:17.1px;font-size:11.1px;color:#1a1a1a;white-space:nowrap;">1</div>
<div style="position:absolute;left:1026.25px;width:600px;text-align:center;transform-origin:50% 50%;top:470.95px;height:17.1px;line-height:17.1px;font-size:11.1px;color:#1a1a1a;white-space:nowrap;">0</div>
<div style="position:absolute;left:1057.75px;width:600px;text-align:center;transform-origin:50% 50%;top:484.85px;height:17.1px;line-height:17.1px;font-size:11.1px;color:#1a1a1a;white-space:nowrap;">3</div>
<svg style="position:absolute;left:0;top:0;" width="1600" height="818"><rect x="343.2" y="514.07" width="259" height="13.769999999999959" fill="none" stroke="#217346" stroke-width="1.7"/><rect x="600" y="525.54" width="5" height="5" fill="#217346" stroke="#fff" stroke-width="0.8"/></svg>
<div style="position:absolute;left:38px;top:194px;width:64.5px;height:83px;background:#efefef;border-right:2px solid #7a7a7a;border-bottom:2px solid #7a7a7a;border-top:1px solid #e0e0e0;border-left:1px solid #e0e0e0;box-sizing:border-box;"></div>
<svg style="position:absolute;left:44px;top:203px;" width="55" height="46" viewBox="0 0 55 46"><path d="M26.6 4.5 L51.8 20.4 L32.4 43.8 L13.3 25.6 Z" fill="#9b7d6a" stroke="#3a2a20" stroke-width="1"/><path d="M27 7.5 L48.5 21 L31.5 40.5 L16.5 25.8 Z" fill="#fff" stroke="#555" stroke-width="0.5"/><path d="M38 5 Q40 2 43 5 L47 13 L42 19 L34 12 Z" fill="#d6d6d6" stroke="#555" stroke-width="0.7"/><path d="M30.7 14.7 L40.5 22.2 M28.4 18.7 L38.2 25.6 M25.5 22.7 L35.9 29.7" stroke="#222" stroke-width="1.1"/><path d="M25 13 L29 12 M23 17 L27 16 M21 21 L25 20" stroke="#f06a20" stroke-width="1.4"/><g fill="#111"><ellipse cx="5.5" cy="6.5" rx="4.8" ry="4.2"/><path d="M6 8 L14 8.5 L13 9.5 L6 10 Z"/><path d="M5 11 L10 11 L12 14.5 L25 16.5 L25 18 L13 18.5 L11 20 L11 28 L13 44 L17 43.5 L17 45.5 L8 45.5 L6 30 L4 23 L0.5 21.5 L1 19.5 L4 20 L3 15 Z"/></g></svg>
<div style="position:absolute;left:-231.50px;width:600px;text-align:center;transform-origin:50% 50%;top:247.75px;height:17.5px;line-height:17.5px;font-size:11.5px;color:#262626;white-space:nowrap;transform:scaleX(0.93);">Dialog</div>
<div style="position:absolute;left:131.5px;top:194px;width:62.0px;height:83px;background:#efefef;border-right:2px solid #7a7a7a;border-bottom:2px solid #7a7a7a;border-top:1px solid #e0e0e0;border-left:1px solid #e0e0e0;box-sizing:border-box;"></div>
<svg style="position:absolute;left:140px;top:197px;" width="42" height="42" viewBox="0 0 42 42"><circle cx="21" cy="21" r="19.8" fill="#00979d"/><g fill="none" stroke="#fff" stroke-width="3"><ellipse cx="14" cy="21" rx="7" ry="6.2"/><ellipse cx="28" cy="21" rx="7" ry="6.2"/></g><path d="M11.5 21 H16.5 M25.5 21 H30.5 M28 18.5 V23.5" stroke="#fff" stroke-width="1.4"/></svg>
<div style="position:absolute;left:-140.20px;width:600px;text-align:center;transform-origin:50% 50%;top:239.75px;height:17.5px;line-height:17.5px;font-size:11.5px;color:#262626;white-space:nowrap;transform:scaleX(0.93);"><u>Z</u>. Arduino</div>
<div style="position:absolute;left:-139.00px;width:600px;text-align:center;transform-origin:50% 50%;top:255.25px;height:17.5px;line-height:17.5px;font-size:11.5px;color:#262626;white-space:nowrap;transform:scaleX(0.93);">schicken</div>
<div style="position:absolute;left:233px;top:194px;width:66px;height:83px;background:#efefef;border-right:2px solid #7a7a7a;border-bottom:2px solid #7a7a7a;border-top:1px solid #e0e0e0;border-left:1px solid #e0e0e0;box-sizing:border-box;"></div>
<svg style="position:absolute;left:239px;top:196px;" width="55" height="46" viewBox="0 0 55 46"><g stroke="#111" stroke-width="1.8" fill="#f5f5f5"><rect x="1.5" y="1.5" width="24" height="9"/><path d="M13.5 1.5 V10.5" fill="none"/><rect x="27" y="13" width="24" height="9" fill="#d8d8d8"/><path d="M39 13 V22" fill="none"/></g><path d="M11 17.5 H24" stroke="#111" stroke-width="2"/><path d="M10 17.5 L15 14 V21 Z" fill="#111"/><g stroke="#111" stroke-width="1.8" fill="#fff"><rect x="1.5" y="26" width="24" height="18"/><path d="M13.5 26 V44 M1.5 35 H25.5" fill="none"/></g><path d="M1.5 26 H25.5 M1.5 35 H25.5" stroke="#1e7a3a" stroke-width="2"/></svg>
<div style="position:absolute;left:-37.20px;width:600px;text-align:center;transform-origin:50% 50%;top:239.75px;height:17.5px;line-height:17.5px;font-size:11.5px;color:#262626;white-space:nowrap;transform:scaleX(0.93);">Zeile</div>
<div style="position:absolute;left:-37.00px;width:600px;text-align:center;transform-origin:50% 50%;top:255.25px;height:17.5px;line-height:17.5px;font-size:11.5px;color:#262626;white-space:nowrap;transform:scaleX(0.93);">einfügen</div>
<div style="position:absolute;left:312.5px;top:194px;width:58.0px;height:83px;background:#efefef;border-right:2px solid #7a7a7a;border-bottom:2px solid #7a7a7a;border-top:1px solid #e0e0e0;border-left:1px solid #e0e0e0;box-sizing:border-box;"></div>
<svg style="position:absolute;left:318px;top:196px;" width="25" height="44" viewBox="0 0 25 44"><rect x="1.5" y="1.5" width="22" height="42.5" fill="#f2f2f2"/><rect x="1.5" y="20.2" width="22" height="8.3" fill="#fff"/><path d="M1.5 1 V44 M12.5 1 V44 M23.5 1 V44" stroke="#111" stroke-width="2.2" fill="none"/><path d="M0.5 1.5 H24.5" stroke="#111" stroke-width="2.2"/><path d="M0.5 10 H24.5" stroke="#111" stroke-width="2.2"/><path d="M0.5 18.8 H24.5" stroke="#111" stroke-width="2.2"/><path d="M0.5 30.5 H24.5" stroke="#111" stroke-width="2.2"/><path d="M0.5 38 H24.5" stroke="#111" stroke-width="2.2"/><path d="M1 20.4 H24" stroke="#1e7a3a" stroke-width="1.9"/><path d="M1 28.3 H24" stroke="#1e7a3a" stroke-width="1.9"/><path d="M1.5 20 V29 M12.5 20 V29 M23.5 20 V29" stroke="#1e7a3a" stroke-width="1.2" fill="none"/></svg>
<svg style="position:absolute;left:330px;top:205px;" width="34" height="37" viewBox="0 0 34 37"><path d="M3 13 Q12 1 20 11" fill="none" stroke="#e01010" stroke-width="1.6"/><path d="M17 10 L23.5 15.5 L23 8.5 Z" fill="#e01010"/><rect x="17.5" y="19" width="12" height="16" rx="1" fill="#f5f5f5" stroke="#444" stroke-width="1"/><rect x="16.5" y="17" width="14" height="2.5" fill="#e0e0e0" stroke="#444" stroke-width="0.8"/><path d="M21 22 V32.5 M23.5 22 V32.5 M26 22 V32.5" stroke="#444" stroke-width="0.9"/></svg>
<div style="position:absolute;left:38.50px;width:600px;text-align:center;transform-origin:50% 50%;top:239.75px;height:17.5px;line-height:17.5px;font-size:11.5px;color:#262626;white-space:nowrap;transform:scaleX(0.93);">Lösche</div>
<div style="position:absolute;left:38.50px;width:600px;text-align:center;transform-origin:50% 50%;top:255.25px;height:17.5px;line-height:17.5px;font-size:11.5px;color:#262626;white-space:nowrap;transform:scaleX(0.93);">Zeilen</div>
<div style="position:absolute;left:373.5px;top:194px;width:66.5px;height:83px;background:#efefef;border-right:2px solid #7a7a7a;border-bottom:2px solid #7a7a7a;border-top:1px solid #e0e0e0;border-left:1px solid #e0e0e0;box-sizing:border-box;"></div>
<svg style="position:absolute;left:380px;top:196px;" width="26" height="44" viewBox="0 0 26 44"><rect x="1.5" y="1.5" width="23" height="42.5" fill="#f2f2f2"/><rect x="1.5" y="20.2" width="23" height="8.3" fill="#fff"/><path d="M1.5 1 V44 M13.0 1 V44 M24.5 1 V44" stroke="#111" stroke-width="2.2" fill="none"/><path d="M0.5 1.5 H25.5" stroke="#111" stroke-width="2.2"/><path d="M0.5 10 H25.5" stroke="#111" stroke-width="2.2"/><path d="M0.5 18.8 H25.5" stroke="#111" stroke-width="2.2"/><path d="M0.5 30.5 H25.5" stroke="#111" stroke-width="2.2"/><path d="M0.5 38 H25.5" stroke="#111" stroke-width="2.2"/><path d="M1 20.4 H25" stroke="#1e7a3a" stroke-width="1.9"/><path d="M1 28.3 H25" stroke="#1e7a3a" stroke-width="1.9"/><path d="M1.5 20 V29 M13.0 20 V29 M24.5 20 V29" stroke="#1e7a3a" stroke-width="1.2" fill="none"/></svg>
<svg style="position:absolute;left:405px;top:202px;" width="14" height="26" viewBox="0 0 14 26"><path d="M1 25 H11 V5 H4" fill="none" stroke="#111" stroke-width="1.6"/><path d="M1 5 L5 1.5 V8.5 Z" fill="#111"/></svg>
<div style="position:absolute;left:105.60px;width:600px;text-align:center;transform-origin:50% 50%;top:239.75px;height:17.5px;line-height:17.5px;font-size:11.5px;color:#262626;white-space:nowrap;transform:scaleX(0.93);">Verschiebe</div>
<div style="position:absolute;left:105.60px;width:600px;text-align:center;transform-origin:50% 50%;top:255.25px;height:17.5px;line-height:17.5px;font-size:11.5px;color:#262626;white-space:nowrap;transform:scaleX(0.93);">Zeilen</div>
<div style="position:absolute;left:462.5px;top:193px;width:66.0px;height:84px;background:#efefef;border-right:2px solid #7a7a7a;border-bottom:2px solid #7a7a7a;border-top:1px solid #e0e0e0;border-left:1px solid #e0e0e0;box-sizing:border-box;"></div>
<svg style="position:absolute;left:469px;top:195px;" width="27" height="44" viewBox="0 0 27 44"><rect x="1.5" y="1.5" width="24" height="42.5" fill="#f2f2f2"/><rect x="1.5" y="20.2" width="24" height="8.3" fill="#fff"/><path d="M1.5 1 V44 M13.5 1 V44 M25.5 1 V44" stroke="#111" stroke-width="2.2" fill="none"/><path d="M0.5 1.5 H26.5" stroke="#111" stroke-width="2.2"/><path d="M0.5 10 H26.5" stroke="#111" stroke-width="2.2"/><path d="M0.5 18.8 H26.5" stroke="#111" stroke-width="2.2"/><path d="M0.5 30.5 H26.5" stroke="#111" stroke-width="2.2"/><path d="M0.5 38 H26.5" stroke="#111" stroke-width="2.2"/><path d="M1 20.4 H26" stroke="#1e7a3a" stroke-width="1.9"/><path d="M1 28.3 H26" stroke="#1e7a3a" stroke-width="1.9"/><path d="M1.5 20 V29 M13.5 20 V29 M25.5 20 V29" stroke="#1e7a3a" stroke-width="1.2" fill="none"/></svg>
<svg style="position:absolute;left:494px;top:216px;" width="26" height="20" viewBox="0 0 26 20"><path d="M8 2 H14 V8 H3" fill="none" stroke="#1515e0" stroke-width="1.8"/><path d="M1 8 L5 4.5 V11.5 Z" fill="#1515e0"/><path d="M18 7 V19 M12 13 H25" stroke="#1515e0" stroke-width="2.4"/></svg>
<div style="position:absolute;left:192.80px;width:600px;text-align:center;transform-origin:50% 50%;top:239.25px;height:17.5px;line-height:17.5px;font-size:11.5px;color:#262626;white-space:nowrap;transform:scaleX(0.93);">Kopiere</div>
<div style="position:absolute;left:192.90px;width:600px;text-align:center;transform-origin:50% 50%;top:254.75px;height:17.5px;line-height:17.5px;font-size:11.5px;color:#262626;white-space:nowrap;transform:scaleX(0.93);">Zeilen</div>
<div style="position:absolute;left:554.5px;top:194px;width:50.5px;height:83.5px;background:#efefef;border-right:2px solid #7a7a7a;border-bottom:2px solid #7a7a7a;border-top:1px solid #e0e0e0;border-left:1px solid #e0e0e0;box-sizing:border-box;"></div>
<svg style="position:absolute;left:560px;top:196px;" width="20" height="44" viewBox="0 0 20 44"><rect x="1.5" y="1.5" width="17" height="42.5" fill="#f2f2f2"/><rect x="1.5" y="20.2" width="17" height="8.3" fill="#fff"/><path d="M1.5 1 V44 M10.0 1 V44 M18.5 1 V44" stroke="#111" stroke-width="2.2" fill="none"/><path d="M0.5 1.5 H19.5" stroke="#111" stroke-width="2.2"/><path d="M0.5 10 H19.5" stroke="#111" stroke-width="2.2"/><path d="M0.5 18.8 H19.5" stroke="#111" stroke-width="2.2"/><path d="M0.5 30.5 H19.5" stroke="#111" stroke-width="2.2"/><path d="M0.5 38 H19.5" stroke="#111" stroke-width="2.2"/><path d="M1 20.4 H19" stroke="#1e7a3a" stroke-width="1.9"/><path d="M1 28.3 H19" stroke="#1e7a3a" stroke-width="1.9"/><path d="M1.5 20 V29 M10.0 20 V29 M18.5 20 V29" stroke="#1e7a3a" stroke-width="1.2" fill="none"/></svg>
<svg style="position:absolute;left:579px;top:210px;" width="20" height="18" viewBox="0 0 20 18"><ellipse cx="10" cy="9" rx="9" ry="6.5" fill="#111"/><circle cx="10" cy="9" r="2.8" fill="#fff"/><circle cx="10" cy="9" r="1.2" fill="#888"/><path d="M2 17 L18 1" stroke="#111" stroke-width="1.4"/><path d="M3 16 L17 2" stroke="#efefef" stroke-width="0.6"/></svg>
<div style="position:absolute;left:278.00px;width:600px;text-align:center;transform-origin:50% 50%;top:241.25px;height:16.5px;line-height:16.5px;font-size:10.5px;color:#262626;white-space:nowrap;transform:scaleX(0.93);letter-spacing:-0.4px;">Aus- oder</div>
<div style="position:absolute;left:278.50px;width:600px;text-align:center;transform-origin:50% 50%;top:256.25px;height:16.5px;line-height:16.5px;font-size:10.5px;color:#262626;white-space:nowrap;transform:scaleX(0.93);letter-spacing:-0.4px;">Einblenden</div>
<div style="position:absolute;left:627px;top:194px;width:63.5px;height:83.5px;background:#efefef;border-right:2px solid #7a7a7a;border-bottom:2px solid #7a7a7a;border-top:1px solid #e0e0e0;border-left:1px solid #e0e0e0;box-sizing:border-box;"></div>
<svg style="position:absolute;left:634px;top:196px;" width="26" height="44" viewBox="0 0 26 44"><rect x="1.5" y="1.5" width="23" height="42.5" fill="#fff"/><path d="M1.5 1 V44 M13.0 1 V44 M24.5 1 V44" stroke="#1e7a3a" stroke-width="2.2" fill="none"/><path d="M0.5 1.5 H25.5" stroke="#1e7a3a" stroke-width="2.2"/><path d="M0.5 9.8 H25.5" stroke="#1e7a3a" stroke-width="2.2"/><path d="M0.5 18.2 H25.5" stroke="#1e7a3a" stroke-width="2.2"/><path d="M0.5 26.6 H25.5" stroke="#1e7a3a" stroke-width="2.2"/><path d="M0.5 35 H25.5" stroke="#1e7a3a" stroke-width="2.2"/></svg>
<svg style="position:absolute;left:658px;top:211px;" width="24" height="16" viewBox="0 0 24 16"><path d="M1 8 Q12 -3 23 8 Q12 19 1 8 Z" fill="#111"/><circle cx="12" cy="8" r="3.5" fill="#fff"/><circle cx="12" cy="8" r="1.3" fill="#777"/></svg>
<div style="position:absolute;left:357.00px;width:600px;text-align:center;transform-origin:50% 50%;top:240.75px;height:17.5px;line-height:17.5px;font-size:11.5px;color:#262626;white-space:nowrap;transform:scaleX(0.93);">Alle</div>
<div style="position:absolute;left:358.00px;width:600px;text-align:center;transform-origin:50% 50%;top:255.75px;height:17.5px;line-height:17.5px;font-size:11.5px;color:#262626;white-space:nowrap;transform:scaleX(0.93);">Einblenden</div>
<div style="position:absolute;left:714.5px;top:194px;width:66.0px;height:83.5px;background:#efefef;border-right:2px solid #7a7a7a;border-bottom:2px solid #7a7a7a;border-top:1px solid #e0e0e0;border-left:1px solid #e0e0e0;box-sizing:border-box;"></div>
<svg style="position:absolute;left:721px;top:196px;" width="52" height="50" viewBox="0 0 52 50"><path d="M11.5 1.5 H40 L48.5 10 V46.5 H11.5 Z" fill="#fff" stroke="#222" stroke-width="1.4"/><path d="M40 1.5 V10 H48.5" fill="#f4f4f4" stroke="#222" stroke-width="1.2"/><path d="M14 14 V43 M20 14 V43 M26 14 V43 M32 14 V43 M38 14 V43 M44 14 V43 M14 14.0 H44 M14 18.1 H44 M14 22.3 H44 M14 26.4 H44 M14 30.6 H44 M14 34.7 H44 M14 38.9 H44 M14 43.0 H44 " stroke="#9a9a9a" stroke-width="1.1" fill="none"/><path d="M25 8.5 H35" stroke="#999" stroke-width="1.2"/><defs><clipPath id="nbc"><path d="M0 26 L32 14 V40 H0 Z"/></clipPath></defs><circle cx="16" cy="20" r="13.5" fill="#ee7676" stroke="#d05050" stroke-width="1" stroke-dasharray="1.2 1.2"/><circle cx="16" cy="20" r="13.5" fill="#a31515" clip-path="url(#nbc)"/><text x="16" y="23.5" text-anchor="middle" font-size="10" font-weight="bold" fill="#fff" font-family="Liberation Sans" transform="rotate(-20 16 20)">new</text></svg>
<div style="position:absolute;left:444.40px;width:600px;text-align:center;transform-origin:50% 50%;top:243.25px;height:17.5px;line-height:17.5px;font-size:11.5px;color:#262626;white-space:nowrap;transform:scaleX(0.93);">Lösche</div>
<div style="position:absolute;left:444.40px;width:600px;text-align:center;transform-origin:50% 50%;top:258.75px;height:17.5px;line-height:17.5px;font-size:11.5px;color:#262626;white-space:nowrap;transform:scaleX(0.93);">Tabelle</div>
<div style="position:absolute;left:809px;top:194px;width:59px;height:83.5px;background:#efefef;border-right:2px solid #7a7a7a;border-bottom:2px solid #7a7a7a;border-top:1px solid #e0e0e0;border-left:1px solid #e0e0e0;box-sizing:border-box;"></div>
<svg style="position:absolute;left:812px;top:199px;" width="52" height="52" viewBox="0 0 52 52"><ellipse cx="26" cy="26" rx="24" ry="26" fill="#111"/><ellipse cx="26" cy="26" rx="17.5" ry="19" fill="#fff"/><circle cx="26.0" cy="2.5" r="2.6" fill="#1010e0"/><circle cx="36.8" cy="5.6" r="2.6" fill="#8020d0"/><circle cx="44.6" cy="14.2" r="2.6" fill="#c030c0"/><circle cx="47.5" cy="26.0" r="2.6" fill="#b030b0"/><circle cx="44.6" cy="37.8" r="2.6" fill="#e02020"/><circle cx="36.8" cy="46.4" r="2.6" fill="#e06020"/><circle cx="26.0" cy="49.5" r="2.6" fill="#f0e000"/><circle cx="15.3" cy="46.4" r="2.6" fill="#60d020"/><circle cx="7.4" cy="37.8" r="2.6" fill="#20c040"/><circle cx="4.5" cy="26.0" r="2.6" fill="#20a0a0"/><circle cx="7.4" cy="14.2" r="2.6" fill="#30a0d0"/><circle cx="15.2" cy="5.6" r="2.6" fill="#2060d0"/><g stroke="#999" stroke-width="2.4"><path d="M14 17 H38 M14 26 H38 M14 35 H38"/></g><circle cx="21" cy="17" r="4" fill="#fff" stroke="#e01010" stroke-width="2.5"/><circle cx="30" cy="26" r="4" fill="#fff" stroke="#20b020" stroke-width="2.5"/><circle cx="24" cy="35" r="4" fill="#fff" stroke="#1010e0" stroke-width="2.5"/></svg>
<div style="position:absolute;left:536.00px;width:600px;text-align:center;transform-origin:50% 50%;top:252.25px;height:17.5px;line-height:17.5px;font-size:11.5px;color:#262626;white-space:nowrap;transform:scaleX(0.93);">Optionen</div>
<div style="position:absolute;left:908px;top:194px;width:67px;height:83.5px;background:#efefef;border-right:2px solid #7a7a7a;border-bottom:2px solid #7a7a7a;border-top:1px solid #e0e0e0;border-left:1px solid #e0e0e0;box-sizing:border-box;"></div>
<svg style="position:absolute;left:912px;top:198px;" width="56" height="52" viewBox="0 0 56 52"><path d="M7 11.5 Q8 7 12 7.5 Q16 8.5 14.5 13 Q13 15.5 12.3 18.5" fill="none" stroke="#3cc83c" stroke-width="2"/><circle cx="12.8" cy="21.8" r="1.4" fill="#3cc83c"/><g fill="#111"><ellipse cx="30" cy="15" rx="3.6" ry="4.6" transform="rotate(25 30 15)"/><path d="M24.5 21.5 L29.5 21.5 L29 32 L25 32 Z"/></g><g fill="none" stroke="#111" stroke-width="1.9" stroke-linecap="round" stroke-linejoin="round"><path d="M25.5 22 L20.5 13.5 L27 11.5"/><path d="M29 22 L35 28 L31 31.5"/><path d="M25.5 32 L24.5 45 L20.5 46"/><path d="M28 32 L30.5 47 L25 48"/></g><path d="M34.5 7.5 Q36 5.5 37.5 7 Q37 8.5 35.5 10" fill="none" stroke="#333" stroke-width="0.9"/></svg>
<div style="position:absolute;left:638.80px;width:600px;text-align:center;transform-origin:50% 50%;top:249.25px;height:17.5px;line-height:17.5px;font-size:11.5px;color:#262626;white-space:nowrap;transform:scaleX(0.93);">Help</div>
<div style="position:absolute;left:1583px;top:172px;width:17px;height:646px;background:#e6e6e6;"></div>
<div style="position:absolute;left:1583px;top:230px;width:17px;height:575px;background:#dcdcdc;"></div>
<div style="position:absolute;left:1582px;top:186px;width:1px;height:632px;background:#bdbdbd;"></div>
<div style="position:absolute;left:1573px;top:174px;width:1px;height:12px;background:#c8c8c8;"></div>
<div style="position:absolute;left:1585px;top:175px;width:13px;height:12px;background:#fff;border:1px solid #c6c6c6;box-sizing:border-box;"></div>
<svg style="position:absolute;left:1587px;top:178px;" width="9" height="6" viewBox="0 0 9 6"><path d="M0.5 5 L4.5 1 L8.5 5 Z" fill="#555"/></svg>
<div style="position:absolute;left:1585px;top:188px;width:13px;height:42px;background:#fff;border:1px solid #c6c6c6;box-sizing:border-box;"></div>
<div style="position:absolute;left:1585px;top:805px;width:13px;height:12px;background:#fff;border:1px solid #c6c6c6;box-sizing:border-box;"></div>
<svg style="position:absolute;left:1587px;top:808px;" width="9" height="6" viewBox="0 0 9 6"><path d="M0.5 1 L4.5 5 L8.5 1 Z" fill="#555"/></svg>
<div style="position:absolute;left:0px;top:818px;width:1600px;height:24px;background:#e6e6e6;"></div>
<div style="position:absolute;left:0px;top:818px;width:1600px;height:1px;background:#c8c8c8;"></div>
<svg style="position:absolute;left:20px;top:825px;" width="8" height="10" viewBox="0 0 8 10"><path d="M6.5 1 L1.5 5 L6.5 9 Z" fill="#217346"/></svg>
<svg style="position:absolute;left:44px;top:825px;" width="8" height="10" viewBox="0 0 8 10"><path d="M1.5 1 L6.5 5 L1.5 9 Z" fill="#c0c0c0"/></svg>
<div style="position:absolute;left:-229.00px;width:600px;text-align:center;transform-origin:50% 50%;top:820.50px;height:18px;line-height:18px;font-size:12px;color:#217346;white-space:nowrap;font-weight:bold;">...</div>
<div style="position:absolute;left:83.5px;top:822px;width:1px;height:17px;background:#b0b0b0;"></div>
<div style="position:absolute;left:146.5px;top:822px;width:1px;height:17px;background:#b0b0b0;"></div>
<div style="position:absolute;left:189.5px;top:822px;width:1px;height:17px;background:#b0b0b0;"></div>
<div style="position:absolute;left:233.5px;top:822px;width:1px;height:17px;background:#b0b0b0;"></div>
<div style="position:absolute;left:417.5px;top:822px;width:1px;height:17px;background:#b0b0b0;"></div>
<div style="position:absolute;left:471px;top:822px;width:1px;height:17px;background:#b0b0b0;"></div>
<div style="position:absolute;left:-185.00px;width:600px;text-align:center;transform-origin:50% 50%;top:820.50px;height:18px;line-height:18px;font-size:12px;color:#444;white-space:nowrap;transform:scaleX(0.9);">Selectrix</div>
<div style="position:absolute;left:-132.50px;width:600px;text-align:center;transform-origin:50% 50%;top:820.50px;height:18px;line-height:18px;font-size:12px;color:#444;white-space:nowrap;transform:scaleX(0.9);">CAN</div>
<div style="position:absolute;left:-89.00px;width:600px;text-align:center;transform-origin:50% 50%;top:820.50px;height:18px;line-height:18px;font-size:12px;color:#444;white-space:nowrap;transform:scaleX(0.9);">LNet</div>
<div style="position:absolute;left:-33.00px;width:600px;text-align:center;transform-origin:50% 50%;top:820.50px;height:18px;line-height:18px;font-size:12px;color:#444;white-space:nowrap;transform:scaleX(0.9);">Examples</div>
<div style="position:absolute;left:96.00px;width:600px;text-align:center;transform-origin:50% 50%;top:820.50px;height:18px;line-height:18px;font-size:12px;color:#444;white-space:nowrap;transform:scaleX(0.9);">DCC</div>
<div style="position:absolute;left:144.00px;width:600px;text-align:center;transform-origin:50% 50%;top:820.50px;height:18px;line-height:18px;font-size:12px;color:#444;white-space:nowrap;transform:scaleX(0.9);">Config</div>
<div style="position:absolute;left:302px;top:818px;width:74px;height:21px;background:#fff;border-left:1px solid #c8c8c8;border-right:1px solid #c8c8c8;box-sizing:border-box;"></div>
<div style="position:absolute;left:302px;top:837px;width:74px;height:2px;background:#217346;"></div>
<div style="position:absolute;left:39.00px;width:600px;text-align:center;transform-origin:50% 50%;top:820.00px;height:18px;line-height:18px;font-size:12px;color:#1e6b3c;white-space:nowrap;transform:scaleX(0.9);font-weight:bold;">4 LED Test</div>
<svg style="position:absolute;left:499px;top:823px;" width="14" height="14" viewBox="0 0 14 14"><circle cx="7" cy="7" r="6" fill="none" stroke="#666" stroke-width="1"/><path d="M7 3.5 V10.5 M3.5 7 H10.5" stroke="#666" stroke-width="1.1"/></svg>
<svg style="position:absolute;left:1134px;top:823px;" width="6" height="14" viewBox="0 0 6 14"><circle cx="3" cy="3" r="0.9" fill="#999"/><circle cx="3" cy="7" r="0.9" fill="#999"/><circle cx="3" cy="11" r="0.9" fill="#999"/></svg>
<div style="position:absolute;left:1151px;top:823px;width:429px;height:13px;background:#dadada;"></div>
<div style="position:absolute;left:1151px;top:823px;width:12px;height:13px;background:#fff;border:1px solid #c6c6c6;box-sizing:border-box;"></div>
<svg style="position:absolute;left:1154px;top:826px;" width="6" height="8" viewBox="0 0 6 8"><path d="M5 0.5 L1 4 L5 7.5 Z" fill="#555"/></svg>
<div style="position:absolute;left:1163px;top:823px;width:206px;height:13px;background:#fff;border:1px solid #c6c6c6;box-sizing:border-box;"></div>
<div style="position:absolute;left:1568px;top:823px;width:12px;height:13px;background:#fff;border:1px solid #c6c6c6;box-sizing:border-box;"></div>
<svg style="position:absolute;left:1571px;top:826px;" width="6" height="8" viewBox="0 0 6 8"><path d="M1 0.5 L5 4 L1 7.5 Z" fill="#555"/></svg>
<div style="position:absolute;left:0px;top:842px;width:1600px;height:18px;background:#f3f2f1;"></div>
<div style="position:absolute;left:0px;top:841px;width:1600px;height:1px;background:#d6d6d6;"></div>
<div style="position:absolute;left:6.00px;transform-origin:0 50%;top:842.50px;height:17px;line-height:17px;font-size:11px;color:#444;white-space:nowrap;transform:scaleX(0.9);">Bereit</div>
<div style="position:absolute;left:1348px;top:842px;width:33px;height:18px;background:#dcdcdc;"></div>
<svg style="position:absolute;left:1357px;top:845px;" width="13" height="12" viewBox="0 0 13 12"><g fill="none" stroke="#555" stroke-width="1"><rect x="0.5" y="0.5" width="12" height="11"/><path d="M4.5 0.5 V11.5 M8.5 0.5 V11.5 M0.5 4 H12.5 M0.5 8 H12.5"/></g></svg>
<svg style="position:absolute;left:1391px;top:845px;" width="13" height="12" viewBox="0 0 13 12"><g fill="none" stroke="#555" stroke-width="1"><rect x="0.5" y="0.5" width="12" height="11"/><rect x="3.5" y="2.5" width="6" height="7"/><path d="M5 5 H8 M5 7 H8"/></g></svg>
<svg style="position:absolute;left:1424px;top:845px;" width="13" height="12" viewBox="0 0 13 12"><g fill="none" stroke="#555" stroke-width="1"><rect x="0.5" y="0.5" width="12" height="11"/><path d="M3.5 0.5 V6.5 H9.5 V0.5"/></g></svg>
<div style="position:absolute;left:1451px;top:851px;width:8px;height:1px;background:#555;"></div>
<div style="position:absolute;left:1463px;top:851px;width:84px;height:1px;background:#b0b0b0;"></div>
<div style="position:absolute;left:1503px;top:846px;width:4px;height:11px;background:#777;"></div>
<svg style="position:absolute;left:1549px;top:846px;" width="10" height="10" viewBox="0 0 10 10"><path d="M5 0.5 V9.5 M0.5 5 H9.5" stroke="#555" stroke-width="1"/></svg>
<div style="position:absolute;right:7.00px;transform-origin:100% 50%;top:842.50px;height:17px;line-height:17px;font-size:11px;color:#444;white-space:nowrap;transform:scaleX(0.92);">100 %</div>
<div style="position:absolute;left:0px;top:860px;width:1600px;height:40px;background:linear-gradient(90deg,#1b2614 0%,#1d2516 9%,#22221f 18%,#212325 35%,#202326 50%,#252321 70%,#2a2420 100%);"></div>
<svg style="position:absolute;left:12px;top:868px;" width="28" height="24" viewBox="0 0 28 24"><circle cx="19" cy="8" r="5" fill="#f5a623"/><path d="M5 20 Q1 20 2 15 Q3 11 8 12 Q10 6 16 8 Q21 9 21 13 Q26 13 25 18 Q24 21 20 21 Z" fill="#cfe3f3"/><path d="M5 20 Q1 20 2 16 H25 Q24 21 20 21 Z" fill="#9cc3e3"/></svg>
<div style="position:absolute;left:42.00px;transform-origin:0 50%;top:865.00px;height:17px;line-height:17px;font-size:11px;color:#fff;white-space:nowrap;transform:scaleX(0.92);">10°C</div>
<div style="position:absolute;left:42.00px;transform-origin:0 50%;top:878.00px;height:17px;line-height:17px;font-size:11px;color:#fff;white-space:nowrap;transform:scaleX(0.92);">Stark bewölkt</div>
<svg style="position:absolute;left:513px;top:869px;" width="21" height="21" viewBox="0 0 21 21"><g fill="#3aa0f0"><rect x="0" y="0" width="10" height="10"/><rect x="11" y="0" width="10" height="10"/><rect x="0" y="11" width="10" height="10"/><rect x="11" y="11" width="10" height="10"/></g><g fill="#7fd0ff" opacity="0.6"><rect x="0" y="0" width="10" height="4"/><rect x="11" y="0" width="10" height="4"/></g></svg>
<div style="position:absolute;left:545px;top:867px;width:182px;height:26px;background:#f2f2f2;border-radius:13px;"></div>
<svg style="position:absolute;left:553px;top:872px;" width="16" height="16" viewBox="0 0 16 16"><circle cx="7" cy="7" r="5" fill="none" stroke="#222" stroke-width="1.6"/><path d="M10.5 10.5 L14.5 14.5" stroke="#222" stroke-width="1.8"/></svg>
<div style="position:absolute;left:575.00px;transform-origin:0 50%;top:871.00px;height:18px;line-height:18px;font-size:12px;color:#555;white-space:nowrap;transform:scaleX(0.92);">Suche</div>
<svg style="position:absolute;left:738px;top:870px;" width="20" height="20" viewBox="0 0 20 20"><rect x="1" y="5" width="12" height="11" fill="#666"/><rect x="6" y="2" width="12" height="11" fill="#ddd"/></svg>
<svg style="position:absolute;left:773px;top:869px;" width="22" height="22" viewBox="0 0 22 22"><circle cx="15" cy="5" r="3" fill="#7b83eb"/><circle cx="7" cy="6" r="3.5" fill="#5059c9"/><rect x="10" y="9" width="10" height="10" rx="3" fill="#7b83eb"/><rect x="2" y="10" width="11" height="11" rx="2" fill="#5059c9"/><text x="7.5" y="19" font-size="8" fill="#fff" text-anchor="middle" font-family="Liberation Sans" font-weight="bold">T</text></svg>
<svg style="position:absolute;left:809px;top:869px;" width="22" height="22" viewBox="0 0 22 22"><circle cx="11" cy="11" r="10" fill="#1a8ad6"/><path d="M3 14 Q5 4 14 5 Q20 7 19 12 H8 Q9 17 15 17 Q18 17 20 15 Q18 21 11 21 Q4 20 3 14 Z" fill="#35c1f1"/><path d="M8 12 Q9 8 13 8 Q17 9 16 12 Z" fill="#1a5fb4"/></svg>
<svg style="position:absolute;left:846px;top:869px;" width="22" height="20" viewBox="0 0 22 20"><path d="M1 3 H8 L10 5 H21 V19 H1 Z" fill="#f4c042"/><path d="M1 7 H21 V19 H1 Z" fill="#ffd766"/><rect x="8" y="12" width="8" height="5" fill="#2b7cd3"/></svg>
<div style="position:absolute;left:855px;top:893px;width:4px;height:2px;background:#aaa;border-radius:1px;"></div>
<svg style="position:absolute;left:883px;top:869px;" width="22" height="22" viewBox="0 0 22 22"><path d="M2 6 H20 V20 H2 Z" fill="#f3f3f3"/><path d="M7 6 Q7 1 11 1 Q15 1 15 6" fill="none" stroke="#ccc" stroke-width="1.2"/><rect x="7" y="9" width="4" height="4" fill="#f25022"/><rect x="12" y="9" width="4" height="4" fill="#7fba00"/><rect x="7" y="14" width="4" height="4" fill="#00a4ef"/><rect x="12" y="14" width="4" height="4" fill="#ffb900"/></svg>
<svg style="position:absolute;left:919px;top:869px;" width="22" height="22" viewBox="0 0 22 22"><circle cx="11" cy="11" r="10" fill="#ff6a1a"/><circle cx="11" cy="12" r="6" fill="#7a3fd0"/><path d="M1 11 Q2 2 11 1 Q19 2 21 10 Q17 5 12 6 Q17 9 14 15 Q10 19 5 16 Q2 13 3 9 Z" fill="#ffb21a" opacity="0.9"/></svg>
<svg style="position:absolute;left:956px;top:869px;" width="22" height="22" viewBox="0 0 22 22"><rect x="1" y="1" width="20" height="20" rx="2" fill="#2a6fdb"/><text x="8" y="17" font-size="15" fill="#fff" text-anchor="middle" font-family="Liberation Sans" font-weight="bold">R</text><path d="M14 4 V18" stroke="#bcd" stroke-width="1"/></svg>
<svg style="position:absolute;left:993px;top:869px;" width="22" height="22" viewBox="0 0 22 22"><circle cx="11" cy="11" r="10" fill="#555"/><circle cx="11" cy="11" r="7" fill="none" stroke="#ddd" stroke-width="1.5"/><circle cx="11" cy="11" r="3.5" fill="none" stroke="#ddd" stroke-width="1.5"/><path d="M11 1 V21 M1 11 H21" stroke="#ddd" stroke-width="1"/></svg>
<svg style="position:absolute;left:1029px;top:869px;" width="22" height="22" viewBox="0 0 22 22"><rect x="1" y="1" width="20" height="20" fill="#2a3a4a" stroke="#8ab" stroke-width="1"/><path d="M5 8 L10 4 L17 9 L12 18 L5 14 Z" fill="none" stroke="#4fc3f7" stroke-width="1.5"/></svg>
<div style="position:absolute;left:1061px;top:866px;width:32px;height:28px;background:#3a3f3b;border-radius:4px;"></div>
<svg style="position:absolute;left:1066px;top:869px;" width="22" height="22" viewBox="0 0 22 22"><rect x="5" y="2" width="16" height="18" rx="1.5" fill="#21a366"/><rect x="1" y="5" width="12" height="12" rx="1.5" fill="#107c41"/><text x="7" y="14.5" font-size="9" fill="#fff" text-anchor="middle" font-family="Liberation Sans" font-weight="bold">X</text></svg>
<div style="position:absolute;left:1068px;top:892px;width:18px;height:3px;background:#5fb2f2;border-radius:2px;"></div>
<svg style="position:absolute;left:1435px;top:875px;" width="12" height="8" viewBox="0 0 12 8"><path d="M1 7 L6 2 L11 7" fill="none" stroke="#fff" stroke-width="1.3"/></svg>
<svg style="position:absolute;left:1460px;top:872px;" width="18" height="15" viewBox="0 0 18 15"><path d="M3 12 Q0 12 1 8 Q2 5 5 6 Q7 2 11 3 Q15 4 15 8 Q18 8 17 11 Q16 13 13 13 Z" fill="#aaa"/><path d="M2 1 L16 14" stroke="#ddd" stroke-width="1.2"/></svg>
<svg style="position:absolute;left:1487px;top:871px;" width="18" height="17" viewBox="0 0 18 17"><rect x="1" y="2" width="12" height="10" fill="none" stroke="#fff" stroke-width="1.2"/><path d="M5 15 H10 M7 12 V15" stroke="#fff" stroke-width="1.2"/><rect x="11" y="1" width="5" height="7" rx="2" fill="#222" stroke="#fff" stroke-width="1"/></svg>
<svg style="position:absolute;left:1508px;top:872px;" width="18" height="15" viewBox="0 0 18 15"><path d="M1 5 H4 L8 1.5 V13.5 L4 10 H1 Z" fill="none" stroke="#fff" stroke-width="1.1"/><path d="M10.5 4.5 Q12.5 7.5 10.5 10.5 M12.5 2.5 Q16 7.5 12.5 12.5" fill="none" stroke="#fff" stroke-width="1.1"/></svg>
<div style="position:absolute;right:16.00px;transform-origin:100% 50%;top:865.00px;height:17px;line-height:17px;font-size:11px;color:#fff;white-space:nowrap;transform:scaleX(0.92);">14:42</div>
<div style="position:absolute;right:16.00px;transform-origin:100% 50%;top:878.50px;height:17px;line-height:17px;font-size:11px;color:#fff;white-space:nowrap;transform:scaleX(0.92);">21.12.2025</div>
</body></html>
